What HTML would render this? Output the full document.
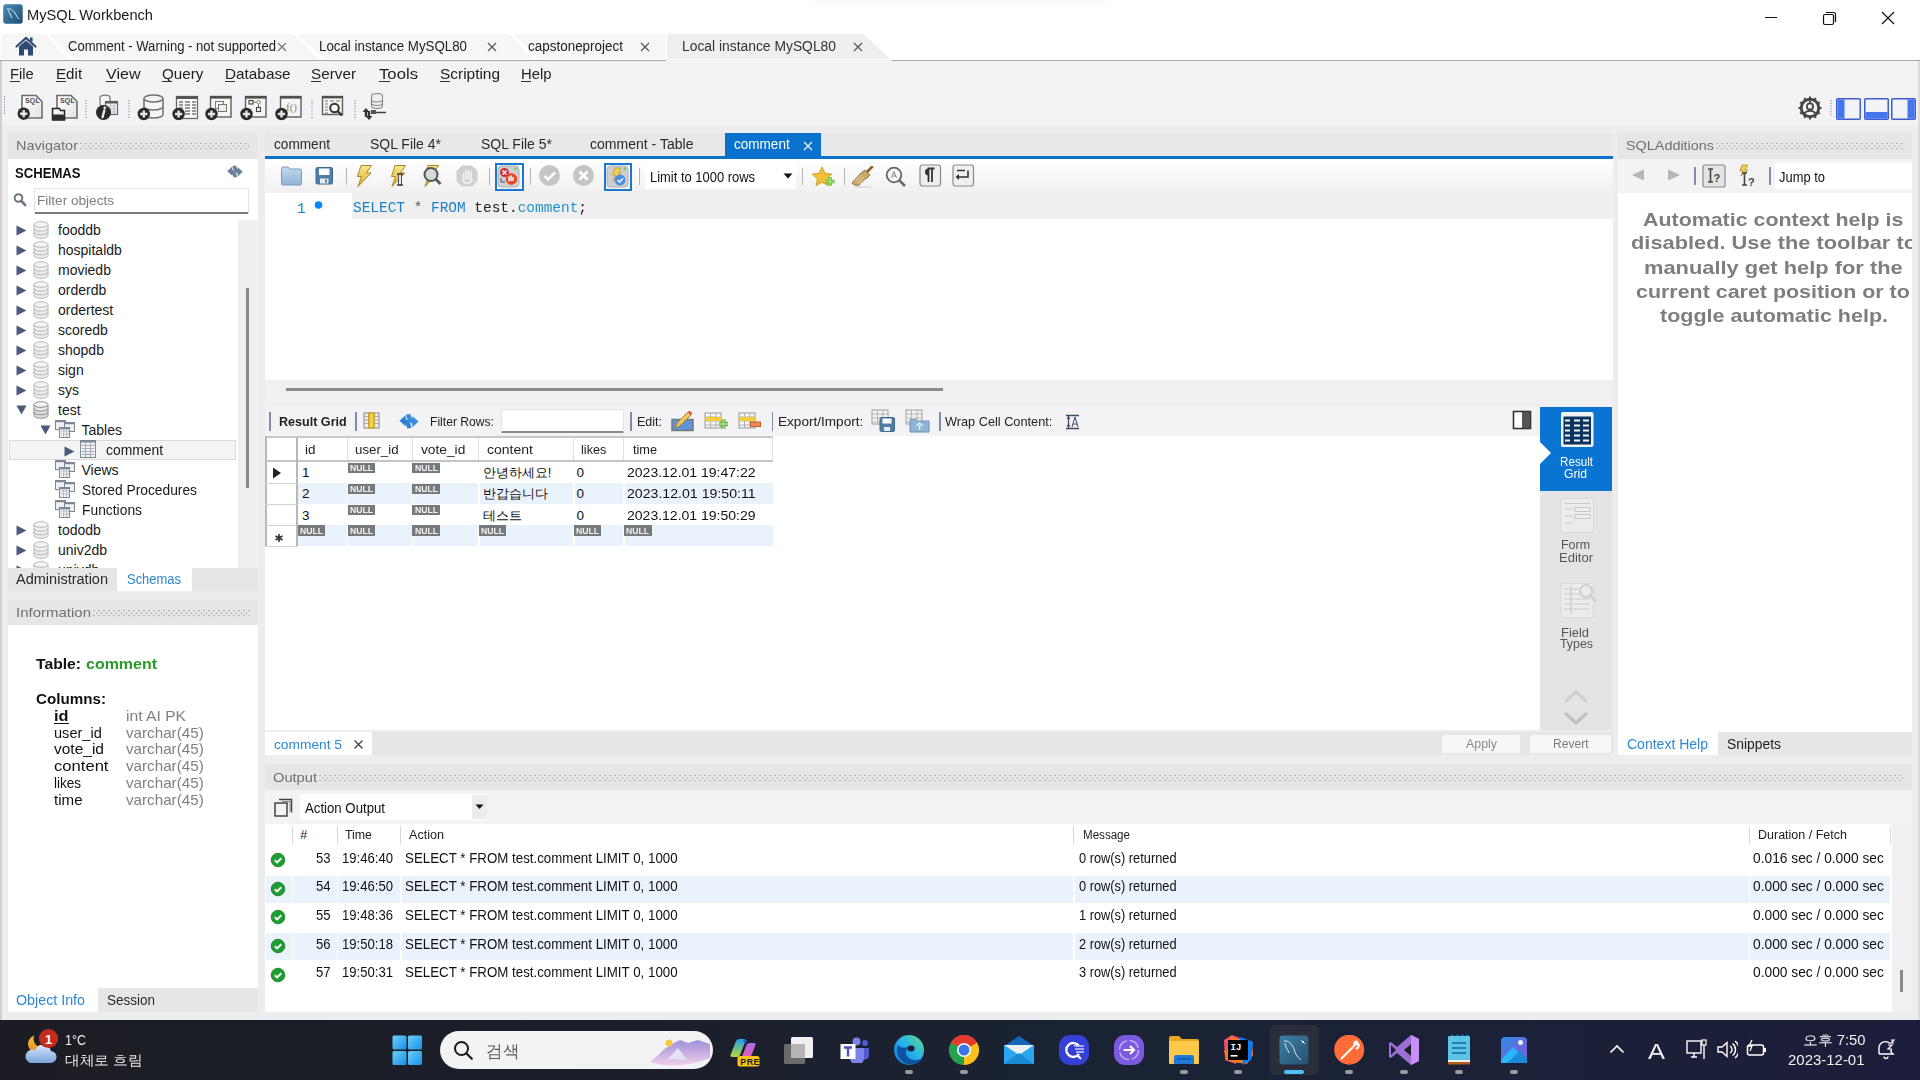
<!DOCTYPE html>
<html><head><meta charset="utf-8">
<style>
*{margin:0;padding:0;box-sizing:border-box}
html,body{width:1920px;height:1080px;overflow:hidden;background:#ededf0;font-family:"Liberation Sans",sans-serif;color:#000;position:relative}
.a{position:absolute;display:block}
.t{position:absolute;white-space:nowrap;line-height:1;transform-origin:0 0}
.dots{background-image:radial-gradient(circle at 1px 1px,#c4c4c4 0.9px,transparent 1.1px);background-size:4px 4px}
</style></head><body>

<div class="a" style="left:0px;top:0px;width:1920px;height:60px;background:#ffffff;"></div>
<div class="a" style="left:0px;top:60px;width:1920px;height:1px;background:#a9a9a9;"></div>
<div class="a" style="left:0px;top:61px;width:1920px;height:64px;background:#f3f3f5;"></div>
<div class="a" style="left:0px;top:125px;width:1920px;height:895px;background:#ededf0;"></div>
<div class="a" style="left:0px;top:61px;width:2px;height:959px;background:#cfcfd2;"></div>
<div class="a" style="left:1918px;top:61px;width:2px;height:959px;background:#dcdcde;"></div>
<div class="a" style="left:815px;top:-6px;width:290px;height:10px;background:#ececec;border-radius:8px;filter:blur(3px);opacity:0.4"></div>
<svg class="a" style="left:3px;top:4px;" width="20" height="20" viewBox="0 0 20 20"><rect x="0.5" y="0.5" width="19" height="19" rx="2" fill="#2f6b97"></rect><rect x="0.5" y="0.5" width="19" height="19" rx="2" fill="url(#tg)"></rect><defs><linearGradient id="tg" x1="0" y1="0" x2="1" y2="1"><stop offset="0" stop-color="#4b8ab8"></stop><stop offset="1" stop-color="#1f4f75"></stop></linearGradient></defs><path d="M4 5c3-1 6 1 8 4 1 2 2 4 4 6M5 6c1 3 3 5 4 8" stroke="#d9e8f3" stroke-width="1" fill="none"></path></svg>
<span class="t" style="left: 27px; top: 7.3px; font-size: 15px; color: rgb(26, 26, 26); transform: scaleX(0.9751);">MySQL Workbench</span>
<div class="a" style="left:1765px;top:17px;width:12px;height:1px;background:#111;"></div>
<svg class="a" style="left:1822px;top:11px;" width="15" height="15" viewBox="0 0 15 15"><rect x="1.5" y="3.5" width="10" height="10" rx="1.5" fill="none" stroke="#111" stroke-width="1.2"></rect><path d="M4 1.5h7.5a2 2 0 0 1 2 2V11" fill="none" stroke="#111" stroke-width="1.2"></path></svg>
<svg class="a" style="left:1881px;top:11px;" width="14" height="14" viewBox="0 0 14 14"><path d="M1 1L13 13M13 1L1 13" stroke="#111" stroke-width="1.2"></path></svg>
<svg class="a" style="left:0;top:32px" width="1000" height="28" viewBox="0 0 1000 28"><path d="M0.5 28 L0.5 4 Q0.5 1 4.5 1 L42 1 Q45 1 47 3 L70 28 Z" fill="#f6f6f6" stroke="#ffffff" stroke-width="1.6"></path></svg>
<svg class="a" style="left:0;top:32px" width="1000" height="28" viewBox="0 0 1000 28"><path d="M74 28 L49 4 Q49 1 53 1 L291 1 Q294 1 296 3 L321 28 Z" fill="#f6f6f6" stroke="#ffffff" stroke-width="1.6"></path></svg>
<svg class="a" style="left:0;top:32px" width="1000" height="28" viewBox="0 0 1000 28"><path d="M325 28 L298 4 Q298 1 302 1 L507 1 Q510 1 512 3 L535 28 Z" fill="#f6f6f6" stroke="#ffffff" stroke-width="1.6"></path></svg>
<svg class="a" style="left:0;top:32px" width="1000" height="28" viewBox="0 0 1000 28"><path d="M539 28 L514 4 Q514 1 518 1 L697 1 Q700 1 702 3 L725 28 Z" fill="#f6f6f6" stroke="#ffffff" stroke-width="1.6"></path></svg>
<svg class="a" style="left:0;top:32px" width="1000" height="28" viewBox="0 0 1000 28"><path d="M666 28 L666 4 Q666 1 670 1 L861 1 Q864 1 866 3 L892 28 Z" fill="#efeff1" stroke="#ffffff" stroke-width="1.6"></path></svg>
<div class="a" style="left:666px;top:60px;width:226px;height:1px;background:#efeff1;"></div>
<svg class="a" style="left:15px;top:36px;" width="22" height="20" viewBox="0 0 22 20"><path d="M1.5 10.5L11 2l9.5 8.5" stroke="#2e4a74" stroke-width="2.2" fill="none" stroke-linecap="round"></path><path d="M4 10.5L11 4.5l7 6V19.5h-5v-6h-4v6H4z" fill="#2e4a74"></path><rect x="15" y="1.5" width="2.6" height="4" fill="#2e4a74"></rect></svg>
<span class="t" style="left: 68px; top: 39.1px; font-size: 14px; color: rgb(34, 34, 34); transform: scaleX(0.9336);">Comment - Warning - not supported</span>
<svg class="a" style="left:277px;top:42px;" width="10" height="10" viewBox="0 0 10 10"><path d="M1 1L9 9M9 1L1 9" stroke="#777" stroke-width="1.2"></path></svg>
<span class="t" style="left: 319px; top: 39.1px; font-size: 14px; color: rgb(34, 34, 34); transform: scaleX(0.9509);">Local instance MySQL80</span>
<svg class="a" style="left:487px;top:42px;" width="10" height="10" viewBox="0 0 10 10"><path d="M1 1L9 9M9 1L1 9" stroke="#555" stroke-width="1.2"></path></svg>
<span class="t" style="left: 528px; top: 39.1px; font-size: 14px; color: rgb(34, 34, 34); transform: scaleX(0.9611);">capstoneproject</span>
<svg class="a" style="left:640px;top:42px;" width="10" height="10" viewBox="0 0 10 10"><path d="M1 1L9 9M9 1L1 9" stroke="#555" stroke-width="1.2"></path></svg>
<span class="t" style="left: 682px; top: 39.1px; font-size: 14px; color: rgb(51, 51, 51); transform: scaleX(0.9895);">Local instance MySQL80</span>
<svg class="a" style="left:853px;top:42px;" width="10" height="10" viewBox="0 0 10 10"><path d="M1 1L9 9M9 1L1 9" stroke="#555" stroke-width="1.2"></path></svg>
<span class="t" style="left: 10.2px; top: 66.3px; font-size: 15px; color: rgb(30, 30, 30); transform: scaleX(0.9846);">File</span>
<div class="a" style="left:10.2px;top:81px;width:10px;height:1px;background:#333;"></div>
<span class="t" style="left: 56.4px; top: 66.3px; font-size: 15px; color: rgb(30, 30, 30); transform: scaleX(1.0093);">Edit</span>
<div class="a" style="left:56.4px;top:81px;width:10px;height:1px;background:#333;"></div>
<span class="t" style="left: 105.5px; top: 66.3px; font-size: 15px; color: rgb(30, 30, 30); transform: scaleX(1.0698);">View</span>
<div class="a" style="left:105.5px;top:81px;width:10px;height:1px;background:#333;"></div>
<span class="t" style="left: 161.7px; top: 66.3px; font-size: 15px; color: rgb(30, 30, 30); transform: scaleX(1.0108);">Query</span>
<div class="a" style="left:161.7px;top:81px;width:10px;height:1px;background:#333;"></div>
<span class="t" style="left: 225px; top: 66.3px; font-size: 15px; color: rgb(30, 30, 30); transform: scaleX(1.0215);">Database</span>
<div class="a" style="left:225px;top:81px;width:10px;height:1px;background:#333;"></div>
<span class="t" style="left: 311px; top: 66.3px; font-size: 15px; color: rgb(30, 30, 30); transform: scaleX(1.0184);">Server</span>
<div class="a" style="left:311px;top:81px;width:10px;height:1px;background:#333;"></div>
<span class="t" style="left: 378.8px; top: 66.3px; font-size: 15px; color: rgb(30, 30, 30); transform: scaleX(1.1133);">Tools</span>
<div class="a" style="left:378.8px;top:81px;width:11px;height:1px;background:#333;"></div>
<span class="t" style="left: 440px; top: 66.3px; font-size: 15px; color: rgb(30, 30, 30); transform: scaleX(1.0281);">Scripting</span>
<div class="a" style="left:440px;top:81px;width:10px;height:1px;background:#333;"></div>
<span class="t" style="left: 521.4px; top: 66.3px; font-size: 15px; color: rgb(30, 30, 30); transform: scaleX(0.9916);">Help</span>
<div class="a" style="left:521.4px;top:81px;width:10px;height:1px;background:#333;"></div>
<svg class="a" style="left:3px;top:96px;" width="3" height="18" viewBox="0 0 3 18"><line x1="1.5" y1="0" x2="1.5" y2="18" stroke="#6a7fa8" stroke-width="1" stroke-dasharray="1.2 1.6"></line></svg>
<svg class="a" style="left:14px;top:94px;" width="32" height="28" viewBox="0 0 32 28"><defs><linearGradient id="dg" x1="0" y1="0" x2="1" y2="1"><stop offset="0" stop-color="#ffffff"></stop><stop offset="1" stop-color="#e4e4e4"></stop></linearGradient></defs><path d="M8 1.5H22 L28 7.5V24H8Z" fill="url(#dg)" stroke="#6d6d6d" stroke-width="1.6"></path><text x="11" y="9" font-family="Liberation Sans" font-size="7" font-weight="bold" fill="#4a4a4a" letter-spacing="0.2">SQL</text><circle cx="9.7" cy="19.7" r="6.2" fill="#2a2a2a"></circle><path d="M6.1 19.7H13.299999999999999M9.7 16.099999999999998V23.3" stroke="#e6e6e6" stroke-width="2.4"></path></svg>
<svg class="a" style="left:50px;top:94px;" width="32" height="28" viewBox="0 0 32 28"><path d="M7 1.5H21 L27 7.5V24H7Z" fill="url(#dg)" stroke="#6d6d6d" stroke-width="1.6"></path><text x="10" y="9" font-family="Liberation Sans" font-size="7" font-weight="bold" fill="#4a4a4a" letter-spacing="0.2">SQL</text><path d="M2.5 14.5H9.5L10.5 16.5H14.5V26H2.5Z" fill="#f2f2f2" stroke="#222" stroke-width="1.5"></path><path d="M1.5 20.5H13.5L15.5 26H3.5Z" fill="#2d2d2d"></path></svg>
<svg class="a" style="left:85px;top:100px;" width="2" height="18" viewBox="0 0 2 18"><line x1="1" y1="0" x2="1" y2="18" stroke="#6a7fa8" stroke-width="1" stroke-dasharray="1.2 1.6"></line></svg>
<svg class="a" style="left:94px;top:93px;" width="28" height="30" viewBox="0 0 28 30"><ellipse cx="11" cy="4.5" rx="5" ry="2.3" fill="#f4f4f4" stroke="#777" stroke-width="1.2"></ellipse><path d="M6 4.5V11a5 2.3 0 0 0 10 0V4.5" fill="#f4f4f4" stroke="#777" stroke-width="1.2"></path><rect x="11.5" y="8.5" width="12" height="13" fill="#f4f4f4" stroke="#666" stroke-width="1.2"></rect><rect x="11.5" y="8.5" width="12" height="2" fill="#555"></rect><path d="M13 13h9M13 16h9M13 19h9M16.5 11v10M20 11v10" stroke="#bbb" stroke-width="1"></path><circle cx="9.5" cy="19.5" r="7.5" fill="#2a2a2a"></circle><circle cx="10.8" cy="14.8" r="1.4" fill="#e8e8e8"></circle><path d="M10.3 17.5L8.6 24" stroke="#e8e8e8" stroke-width="2.4" stroke-linecap="round"></path></svg>
<svg class="a" style="left:128px;top:100px;" width="2" height="18" viewBox="0 0 2 18"><line x1="1" y1="0" x2="1" y2="18" stroke="#6a7fa8" stroke-width="1" stroke-dasharray="1.2 1.6"></line></svg>
<svg class="a" style="left:136px;top:93px;" width="30" height="30" viewBox="0 0 30 30"><path d="M8 5.5V21.5a9.5 3.5 0 0 0 19 0V5.5" fill="#f6f6f6" stroke="#6f6f6f" stroke-width="1.5"></path><ellipse cx="17.5" cy="5.5" rx="9.5" ry="3.5" fill="#f3f3f3" stroke="#6f6f6f" stroke-width="1.5"></ellipse><path d="M8 13.5a9.5 3.5 0 0 0 19 0" fill="none" stroke="#6f6f6f" stroke-width="1.5"></path><circle cx="7.8" cy="21" r="6.2" fill="#2a2a2a"></circle><path d="M4.199999999999999 21H11.4M7.8 17.4V24.6" stroke="#e6e6e6" stroke-width="2.4"></path></svg>
<svg class="a" style="left:170px;top:93px;" width="30" height="30" viewBox="0 0 30 30"><rect x="6.5" y="3.5" width="21" height="22" fill="#f8f8f8" stroke="#6a6a6a" stroke-width="1.3"></rect><rect x="6" y="3" width="22" height="3" fill="#555"></rect><path d="M9 9h4M15 9h5M22 9h4M9 12h4M15 12h5M22 12h4M9 15h4M15 15h5M22 15h4M15 18h5M22 18h4M15 21h5M22 21h4" stroke="#7a7a7a" stroke-width="1.6"></path><circle cx="8.6" cy="21" r="6.2" fill="#2a2a2a"></circle><path d="M5.0 21H12.2M8.6 17.4V24.6" stroke="#e6e6e6" stroke-width="2.4"></path></svg>
<svg class="a" style="left:204px;top:93px;" width="30" height="30" viewBox="0 0 30 30"><rect x="6.5" y="3.5" width="20.5" height="20.5" fill="#f5f5f3" stroke="#5f5f5f" stroke-width="1.4"></rect><rect x="6" y="3" width="21.5" height="2.6" fill="#4f4f4f"></rect><rect x="11.5" y="8.5" width="8" height="7" fill="none" stroke="#777" stroke-width="1"></rect><rect x="14.5" y="11.5" width="8" height="7" fill="#eee" stroke="#777" stroke-width="1"></rect><circle cx="7.5" cy="21" r="6.2" fill="#2a2a2a"></circle><path d="M3.9 21H11.1M7.5 17.4V24.6" stroke="#e6e6e6" stroke-width="2.4"></path></svg>
<svg class="a" style="left:239px;top:93px;" width="30" height="30" viewBox="0 0 30 30"><rect x="6.5" y="3.5" width="20.5" height="20.5" fill="#f5f5f3" stroke="#5f5f5f" stroke-width="1.4"></rect><rect x="6" y="3" width="21.5" height="2.6" fill="#4f4f4f"></rect><rect x="10" y="7.5" width="4" height="3.5" fill="none" stroke="#444" stroke-width="1.1"></rect><path d="M14 9.2h3M19.5 7l2.2 2.2-2.2 2.2-2.2-2.2z" fill="none" stroke="#666" stroke-width="1"></path><path d="M19.5 11.5v3" stroke="#666"></path><rect x="17.5" y="14.5" width="4" height="4" fill="none" stroke="#444" stroke-width="1.1"></rect><circle cx="7.5" cy="21" r="6.2" fill="#2a2a2a"></circle><path d="M3.9 21H11.1M7.5 17.4V24.6" stroke="#e6e6e6" stroke-width="2.4"></path></svg>
<svg class="a" style="left:274px;top:93px;" width="30" height="30" viewBox="0 0 30 30"><rect x="6.5" y="3.5" width="20.5" height="20.5" fill="#f5f5f3" stroke="#5f5f5f" stroke-width="1.4"></rect><rect x="6" y="3" width="21.5" height="2.6" fill="#4f4f4f"></rect><text x="12" y="18" font-family="Liberation Serif" font-size="11" fill="#888">f()</text><circle cx="7.5" cy="21" r="6.2" fill="#2a2a2a"></circle><path d="M3.9 21H11.1M7.5 17.4V24.6" stroke="#e6e6e6" stroke-width="2.4"></path></svg>
<svg class="a" style="left:311px;top:100px;" width="2" height="18" viewBox="0 0 2 18"><line x1="1" y1="0" x2="1" y2="18" stroke="#6a7fa8" stroke-width="1" stroke-dasharray="1.2 1.6"></line></svg>
<svg class="a" style="left:318px;top:93px;" width="30" height="30" viewBox="0 0 30 30"><rect x="4.5" y="3.5" width="20" height="18" fill="#f5f5f3" stroke="#5f5f5f" stroke-width="1.4"></rect><rect x="4" y="3" width="21" height="2.4" fill="#4f4f4f"></rect><path d="M7 8h3M12 8h4M18 8h4M7 11h3M7 14h3M7 17h3M7 20h3" stroke="#777" stroke-width="1.2"></path><circle cx="16.5" cy="15" r="4.3" fill="#f5f5f3" stroke="#333" stroke-width="2"></circle><path d="M19.5 18l4.5 4.5" stroke="#333" stroke-width="2.4"></path></svg>
<svg class="a" style="left:354px;top:100px;" width="2" height="18" viewBox="0 0 2 18"><line x1="1" y1="0" x2="1" y2="18" stroke="#6a7fa8" stroke-width="1" stroke-dasharray="1.2 1.6"></line></svg>
<svg class="a" style="left:358px;top:91px;" width="32" height="32" viewBox="0 0 32 32"><ellipse cx="19" cy="5" rx="5.5" ry="2.5" fill="#eee" stroke="#888" stroke-width="1.1"></ellipse><path d="M13.5 5v10a5.5 2.5 0 0 0 11 0V5M13.5 8.5a5.5 2.5 0 0 0 11 0M13.5 12a5.5 2.5 0 0 0 11 0" fill="#eee" stroke="#888" stroke-width="1.1"></path><path d="M14 21.5h14" stroke="#444" stroke-width="1.5"></path><rect x="13" y="19" width="5" height="4" fill="#555"></rect><path d="M8 17l-3.5 4h2.3v5h2.4v-5h2.3z" fill="#333"></path><path d="M11 29l3.5-4h-2.3v-5h-2.4v5H7.5z" fill="#333"></path></svg>
<svg class="a" style="left:1797px;top:95px;" width="26" height="26" viewBox="0 0 26 26"><g fill="#444"><circle cx="13" cy="13" r="10.2"></circle></g><g stroke="#444" stroke-width="2"><line x1="13" y1="1.5" x2="13" y2="3.5" transform="rotate(0 13 13)"></line><line x1="13" y1="1.5" x2="13" y2="3.5" transform="rotate(30 13 13)"></line><line x1="13" y1="1.5" x2="13" y2="3.5" transform="rotate(60 13 13)"></line><line x1="13" y1="1.5" x2="13" y2="3.5" transform="rotate(90 13 13)"></line><line x1="13" y1="1.5" x2="13" y2="3.5" transform="rotate(120 13 13)"></line><line x1="13" y1="1.5" x2="13" y2="3.5" transform="rotate(150 13 13)"></line><line x1="13" y1="1.5" x2="13" y2="3.5" transform="rotate(180 13 13)"></line><line x1="13" y1="1.5" x2="13" y2="3.5" transform="rotate(210 13 13)"></line><line x1="13" y1="1.5" x2="13" y2="3.5" transform="rotate(240 13 13)"></line><line x1="13" y1="1.5" x2="13" y2="3.5" transform="rotate(270 13 13)"></line><line x1="13" y1="1.5" x2="13" y2="3.5" transform="rotate(300 13 13)"></line><line x1="13" y1="1.5" x2="13" y2="3.5" transform="rotate(330 13 13)"></line></g><circle cx="13" cy="13" r="7.3" fill="#f3f3f5"></circle><circle cx="13" cy="11.5" r="3.1" fill="none" stroke="#444" stroke-width="1.8"></circle><path d="M7.5 18.5a6 4.5 0 0 1 11 0" fill="none" stroke="#444" stroke-width="1.8"></path><path d="M13 6v2.3" stroke="#444" stroke-width="1.8"></path></svg>
<svg class="a" style="left:1830px;top:100px;" width="2" height="17" viewBox="0 0 2 17"><line x1="1" y1="0" x2="1" y2="17" stroke="#6a7fa8" stroke-width="1" stroke-dasharray="1.2 1.6"></line></svg>
<svg class="a" style="left:1836px;top:98px;" width="26" height="22" viewBox="0 0 26 22"><rect x="0.75" y="0.75" width="23.5" height="20.5" rx="1" fill="#f3f3f5" stroke="#3d5ccf" stroke-width="1.5"></rect><rect x="1.5" y="1.5" width="7" height="19" fill="#4477ee"></rect></svg>
<svg class="a" style="left:1864px;top:98px;" width="26" height="22" viewBox="0 0 26 22"><rect x="0.75" y="0.75" width="23.5" height="20.5" rx="1" fill="#f3f3f5" stroke="#3d5ccf" stroke-width="1.5"></rect><rect x="1.5" y="14" width="22" height="6.5" fill="#4477ee"></rect></svg>
<svg class="a" style="left:1891px;top:98px;" width="26" height="22" viewBox="0 0 26 22"><rect x="0.75" y="0.75" width="23.5" height="20.5" rx="1" fill="#f3f3f5" stroke="#3d5ccf" stroke-width="1.5"></rect><rect x="16.5" y="1.5" width="7" height="19" fill="#4477ee"></rect></svg>
<svg width="0" height="0" style="position:absolute"><defs><pattern id="hdots" x="0" y="0" width="5" height="5" patternUnits="userSpaceOnUse"><circle cx="1" cy="0.6" r="0.65" fill="#8c8c8c"></circle><circle cx="3.5" cy="3.1" r="0.65" fill="#8c8c8c"></circle></pattern><linearGradient id="dbg" x1="0" y1="0" x2="1" y2="0"><stop offset="0" stop-color="#d8d8d8"></stop><stop offset="0.5" stop-color="#f6f6f6"></stop><stop offset="1" stop-color="#d0d0d0"></stop></linearGradient></defs></svg>
<div class="a" style="left:8px;top:133px;width:250px;height:26px;background:#e6e6e7;"></div>
<span class="t" style="left: 16px; top: 138.6px; font-size: 13.5px; color: rgb(112, 112, 112); transform: scaleX(1.073);">Navigator</span>
<svg class="a" style="left:80px;top:142.5px;" width="170" height="7" viewBox="0 0 170 7"><rect x="0" y="0" width="100%" height="7" fill="url(#hdots)"></rect></svg>
<div class="a" style="left:8px;top:159px;width:250px;height:409px;background:#ffffff;"></div>
<span class="t" style="left: 15px; top: 166.1px; font-size: 14px; color: rgb(17, 17, 17); font-weight: bold; transform: scaleX(0.9355);">SCHEMAS</span>
<svg class="a" style="left:226px;top:164px;" width="18" height="15" viewBox="0 0 18 15"><path d="M5 7.2Q8.5 8 9.3 13.2" stroke="#6b7f9b" stroke-width="3.6" fill="none"></path><path d="M1.2 7.2L6.3 2.6V11.8Z" fill="#6b7f9b"></path><path d="M12.3 7.8Q9 7 8.4 1.8" stroke="#6b7f9b" stroke-width="3.6" fill="none"></path><path d="M16.8 7.8L11.7 12.4V3.2Z" fill="#6b7f9b"></path></svg>
<svg class="a" style="left:13px;top:192px;" width="14" height="16" viewBox="0 0 14 16"><circle cx="5.5" cy="6" r="3.8" fill="none" stroke="#6e7784" stroke-width="2"></circle><path d="M8.3 9l3.8 4" stroke="#6e7784" stroke-width="2.6" stroke-linecap="round"></path></svg>
<div class="a" style="left:34px;top:188px;width:215px;height:26px;background:#ffffff;border:1px solid #e3e3e3;border-bottom:2px solid #7a7a7a;border-radius:2px"></div>
<span class="t" style="left: 37px; top: 193.6px; font-size: 13.5px; color: rgb(125, 125, 125); transform: scaleX(1.0061);">Filter objects</span>
<div class="a" style="left:238px;top:220px;width:20px;height:348px;background:#efeff1;"></div>
<div class="a" style="left:246px;top:288px;width:3px;height:200px;background:#8a8a8a;"></div>
<svg class="a" style="left:16px;top:225px;" width="11" height="11" viewBox="0 0 11 11"><path d="M0.5 0.5L10.5 5.5L0.5 10.5Z" fill="#4a5b7b"></path></svg>
<svg class="a" style="left:33px;top:221px;" width="16" height="18" viewBox="0 0 16 18"><path d="M1 3.5V14.5a7 2.8 0 0 0 14 0V3.5" fill="#ececec" stroke="#b9b9b9" stroke-width="1"></path><ellipse cx="8" cy="3.5" rx="7" ry="2.8" fill="#f4f4f4" stroke="#b9b9b9" stroke-width="1"></ellipse><path d="M1 7.3a7 2.8 0 0 0 14 0M1 11a7 2.8 0 0 0 14 0" fill="none" stroke="#b9b9b9" stroke-width="1"></path><path d="M2 6.5a6 2 0 0 0 12 0" fill="none" stroke="#fff" stroke-width="1" opacity="0.7"></path></svg>
<span class="t" style="left:58px;top:223.1px;font-size:14px;color:#1a1a1a;">fooddb</span>
<svg class="a" style="left:16px;top:245px;" width="11" height="11" viewBox="0 0 11 11"><path d="M0.5 0.5L10.5 5.5L0.5 10.5Z" fill="#4a5b7b"></path></svg>
<svg class="a" style="left:33px;top:241px;" width="16" height="18" viewBox="0 0 16 18"><path d="M1 3.5V14.5a7 2.8 0 0 0 14 0V3.5" fill="#ececec" stroke="#b9b9b9" stroke-width="1"></path><ellipse cx="8" cy="3.5" rx="7" ry="2.8" fill="#f4f4f4" stroke="#b9b9b9" stroke-width="1"></ellipse><path d="M1 7.3a7 2.8 0 0 0 14 0M1 11a7 2.8 0 0 0 14 0" fill="none" stroke="#b9b9b9" stroke-width="1"></path><path d="M2 6.5a6 2 0 0 0 12 0" fill="none" stroke="#fff" stroke-width="1" opacity="0.7"></path></svg>
<span class="t" style="left:58px;top:243.1px;font-size:14px;color:#1a1a1a;">hospitaldb</span>
<svg class="a" style="left:16px;top:265px;" width="11" height="11" viewBox="0 0 11 11"><path d="M0.5 0.5L10.5 5.5L0.5 10.5Z" fill="#4a5b7b"></path></svg>
<svg class="a" style="left:33px;top:261px;" width="16" height="18" viewBox="0 0 16 18"><path d="M1 3.5V14.5a7 2.8 0 0 0 14 0V3.5" fill="#ececec" stroke="#b9b9b9" stroke-width="1"></path><ellipse cx="8" cy="3.5" rx="7" ry="2.8" fill="#f4f4f4" stroke="#b9b9b9" stroke-width="1"></ellipse><path d="M1 7.3a7 2.8 0 0 0 14 0M1 11a7 2.8 0 0 0 14 0" fill="none" stroke="#b9b9b9" stroke-width="1"></path><path d="M2 6.5a6 2 0 0 0 12 0" fill="none" stroke="#fff" stroke-width="1" opacity="0.7"></path></svg>
<span class="t" style="left:58px;top:263.1px;font-size:14px;color:#1a1a1a;">moviedb</span>
<svg class="a" style="left:16px;top:285px;" width="11" height="11" viewBox="0 0 11 11"><path d="M0.5 0.5L10.5 5.5L0.5 10.5Z" fill="#4a5b7b"></path></svg>
<svg class="a" style="left:33px;top:281px;" width="16" height="18" viewBox="0 0 16 18"><path d="M1 3.5V14.5a7 2.8 0 0 0 14 0V3.5" fill="#ececec" stroke="#b9b9b9" stroke-width="1"></path><ellipse cx="8" cy="3.5" rx="7" ry="2.8" fill="#f4f4f4" stroke="#b9b9b9" stroke-width="1"></ellipse><path d="M1 7.3a7 2.8 0 0 0 14 0M1 11a7 2.8 0 0 0 14 0" fill="none" stroke="#b9b9b9" stroke-width="1"></path><path d="M2 6.5a6 2 0 0 0 12 0" fill="none" stroke="#fff" stroke-width="1" opacity="0.7"></path></svg>
<span class="t" style="left:58px;top:283.1px;font-size:14px;color:#1a1a1a;">orderdb</span>
<svg class="a" style="left:16px;top:305px;" width="11" height="11" viewBox="0 0 11 11"><path d="M0.5 0.5L10.5 5.5L0.5 10.5Z" fill="#4a5b7b"></path></svg>
<svg class="a" style="left:33px;top:301px;" width="16" height="18" viewBox="0 0 16 18"><path d="M1 3.5V14.5a7 2.8 0 0 0 14 0V3.5" fill="#ececec" stroke="#b9b9b9" stroke-width="1"></path><ellipse cx="8" cy="3.5" rx="7" ry="2.8" fill="#f4f4f4" stroke="#b9b9b9" stroke-width="1"></ellipse><path d="M1 7.3a7 2.8 0 0 0 14 0M1 11a7 2.8 0 0 0 14 0" fill="none" stroke="#b9b9b9" stroke-width="1"></path><path d="M2 6.5a6 2 0 0 0 12 0" fill="none" stroke="#fff" stroke-width="1" opacity="0.7"></path></svg>
<span class="t" style="left:58px;top:303.1px;font-size:14px;color:#1a1a1a;">ordertest</span>
<svg class="a" style="left:16px;top:325px;" width="11" height="11" viewBox="0 0 11 11"><path d="M0.5 0.5L10.5 5.5L0.5 10.5Z" fill="#4a5b7b"></path></svg>
<svg class="a" style="left:33px;top:321px;" width="16" height="18" viewBox="0 0 16 18"><path d="M1 3.5V14.5a7 2.8 0 0 0 14 0V3.5" fill="#ececec" stroke="#b9b9b9" stroke-width="1"></path><ellipse cx="8" cy="3.5" rx="7" ry="2.8" fill="#f4f4f4" stroke="#b9b9b9" stroke-width="1"></ellipse><path d="M1 7.3a7 2.8 0 0 0 14 0M1 11a7 2.8 0 0 0 14 0" fill="none" stroke="#b9b9b9" stroke-width="1"></path><path d="M2 6.5a6 2 0 0 0 12 0" fill="none" stroke="#fff" stroke-width="1" opacity="0.7"></path></svg>
<span class="t" style="left:58px;top:323.1px;font-size:14px;color:#1a1a1a;">scoredb</span>
<svg class="a" style="left:16px;top:345px;" width="11" height="11" viewBox="0 0 11 11"><path d="M0.5 0.5L10.5 5.5L0.5 10.5Z" fill="#4a5b7b"></path></svg>
<svg class="a" style="left:33px;top:341px;" width="16" height="18" viewBox="0 0 16 18"><path d="M1 3.5V14.5a7 2.8 0 0 0 14 0V3.5" fill="#ececec" stroke="#b9b9b9" stroke-width="1"></path><ellipse cx="8" cy="3.5" rx="7" ry="2.8" fill="#f4f4f4" stroke="#b9b9b9" stroke-width="1"></ellipse><path d="M1 7.3a7 2.8 0 0 0 14 0M1 11a7 2.8 0 0 0 14 0" fill="none" stroke="#b9b9b9" stroke-width="1"></path><path d="M2 6.5a6 2 0 0 0 12 0" fill="none" stroke="#fff" stroke-width="1" opacity="0.7"></path></svg>
<span class="t" style="left:58px;top:343.1px;font-size:14px;color:#1a1a1a;">shopdb</span>
<svg class="a" style="left:16px;top:365px;" width="11" height="11" viewBox="0 0 11 11"><path d="M0.5 0.5L10.5 5.5L0.5 10.5Z" fill="#4a5b7b"></path></svg>
<svg class="a" style="left:33px;top:361px;" width="16" height="18" viewBox="0 0 16 18"><path d="M1 3.5V14.5a7 2.8 0 0 0 14 0V3.5" fill="#ececec" stroke="#b9b9b9" stroke-width="1"></path><ellipse cx="8" cy="3.5" rx="7" ry="2.8" fill="#f4f4f4" stroke="#b9b9b9" stroke-width="1"></ellipse><path d="M1 7.3a7 2.8 0 0 0 14 0M1 11a7 2.8 0 0 0 14 0" fill="none" stroke="#b9b9b9" stroke-width="1"></path><path d="M2 6.5a6 2 0 0 0 12 0" fill="none" stroke="#fff" stroke-width="1" opacity="0.7"></path></svg>
<span class="t" style="left:58px;top:363.1px;font-size:14px;color:#1a1a1a;">sign</span>
<svg class="a" style="left:16px;top:385px;" width="11" height="11" viewBox="0 0 11 11"><path d="M0.5 0.5L10.5 5.5L0.5 10.5Z" fill="#4a5b7b"></path></svg>
<svg class="a" style="left:33px;top:381px;" width="16" height="18" viewBox="0 0 16 18"><path d="M1 3.5V14.5a7 2.8 0 0 0 14 0V3.5" fill="#ececec" stroke="#b9b9b9" stroke-width="1"></path><ellipse cx="8" cy="3.5" rx="7" ry="2.8" fill="#f4f4f4" stroke="#b9b9b9" stroke-width="1"></ellipse><path d="M1 7.3a7 2.8 0 0 0 14 0M1 11a7 2.8 0 0 0 14 0" fill="none" stroke="#b9b9b9" stroke-width="1"></path><path d="M2 6.5a6 2 0 0 0 12 0" fill="none" stroke="#fff" stroke-width="1" opacity="0.7"></path></svg>
<span class="t" style="left:58px;top:383.1px;font-size:14px;color:#1a1a1a;">sys</span>
<svg class="a" style="left:16px;top:405px;" width="11" height="10" viewBox="0 0 11 10"><path d="M0.5 0.5H10.5L5.5 9.5Z" fill="#4a5b7b"></path></svg>
<svg class="a" style="left:33px;top:401px;" width="16" height="18" viewBox="0 0 16 18"><path d="M1 3.5V14.5a7 2.8 0 0 0 14 0V3.5" fill="#dcdcdc" stroke="#8f8f8f" stroke-width="1"></path><ellipse cx="8" cy="3.5" rx="7" ry="2.8" fill="#f4f4f4" stroke="#8f8f8f" stroke-width="1"></ellipse><path d="M1 7.3a7 2.8 0 0 0 14 0M1 11a7 2.8 0 0 0 14 0" fill="none" stroke="#8f8f8f" stroke-width="1"></path><path d="M2 6.5a6 2 0 0 0 12 0" fill="none" stroke="#fff" stroke-width="1" opacity="0.7"></path></svg>
<span class="t" style="left:58px;top:403.1px;font-size:14px;color:#1a1a1a;">test</span>
<svg class="a" style="left:40px;top:425px;" width="11" height="10" viewBox="0 0 11 10"><path d="M0.5 0.5H10.5L5.5 9.5Z" fill="#4a5b7b"></path></svg>
<svg class="a" style="left:55px;top:420px;" width="21" height="18" viewBox="0 0 21 18"><rect x="0.5" y="0.5" width="10" height="9" fill="#eef0f2" stroke="#7d8793" stroke-width="1"></rect><rect x="0" y="0" width="11" height="2.2" fill="#7d8793"></rect><rect x="9.5" y="2.5" width="10" height="9" fill="#eef0f2" stroke="#7d8793" stroke-width="1"></rect><rect x="9" y="2" width="11" height="2.2" fill="#7d8793"></rect><rect x="4.5" y="7.5" width="10" height="10" fill="#eef0f2" stroke="#7d8793" stroke-width="1"></rect><rect x="4" y="7" width="11" height="2.2" fill="#7d8793"></rect><path d="M6 11h8M6 14h8M8.5 9v8M11.5 9v8" stroke="#b5bcc5" stroke-width="0.9"></path></svg>
<span class="t" style="left:81.5px;top:423.1px;font-size:14px;color:#1a1a1a;">Tables</span>
<div class="a" style="left:9px;top:440px;width:227px;height:20px;background:#f4f4f4;border:1px solid #dadada"></div>
<svg class="a" style="left:64px;top:446px;" width="11" height="11" viewBox="0 0 11 11"><path d="M0.5 0.5L10.5 5.5L0.5 10.5Z" fill="#4a5b7b"></path></svg>
<svg class="a" style="left:80px;top:440px;" width="17" height="18" viewBox="0 0 17 18"><rect x="0.5" y="0.5" width="15" height="17" fill="#eef0f2" stroke="#7d8793" stroke-width="1"></rect><rect x="0" y="0" width="16" height="2.5" fill="#7d8793"></rect><path d="M2 5.5h12M2 8.5h12M2 11.5h12M2 14.5h12M5.5 3v14M10.5 3v14" stroke="#a6afba" stroke-width="1"></path></svg>
<span class="t" style="left: 105.5px; top: 443.1px; font-size: 14px; color: rgb(26, 26, 26); transform: scaleX(0.99);">comment</span>
<svg class="a" style="left:55px;top:460px;" width="21" height="18" viewBox="0 0 21 18"><rect x="0.5" y="0.5" width="10" height="9" fill="#eef0f2" stroke="#7d8793" stroke-width="1"></rect><rect x="0" y="0" width="11" height="2.2" fill="#7d8793"></rect><rect x="9.5" y="2.5" width="10" height="9" fill="#eef0f2" stroke="#7d8793" stroke-width="1"></rect><rect x="9" y="2" width="11" height="2.2" fill="#7d8793"></rect><rect x="4.5" y="7.5" width="10" height="10" fill="#eef0f2" stroke="#7d8793" stroke-width="1"></rect><rect x="4" y="7" width="11" height="2.2" fill="#7d8793"></rect><path d="M6 11h8M6 14h8M8.5 9v8M11.5 9v8" stroke="#b5bcc5" stroke-width="0.9"></path></svg>
<span class="t" style="left:81.5px;top:463.1px;font-size:14px;color:#1a1a1a;">Views</span>
<svg class="a" style="left:55px;top:480px;" width="21" height="18" viewBox="0 0 21 18"><rect x="0.5" y="0.5" width="10" height="9" fill="#eef0f2" stroke="#7d8793" stroke-width="1"></rect><rect x="0" y="0" width="11" height="2.2" fill="#7d8793"></rect><rect x="9.5" y="2.5" width="10" height="9" fill="#eef0f2" stroke="#7d8793" stroke-width="1"></rect><rect x="9" y="2" width="11" height="2.2" fill="#7d8793"></rect><rect x="4.5" y="7.5" width="10" height="10" fill="#eef0f2" stroke="#7d8793" stroke-width="1"></rect><rect x="4" y="7" width="11" height="2.2" fill="#7d8793"></rect><path d="M6 11h8M6 14h8M8.5 9v8M11.5 9v8" stroke="#b5bcc5" stroke-width="0.9"></path></svg>
<span class="t" style="left: 81.5px; top: 483.1px; font-size: 14px; color: rgb(26, 26, 26); transform: scaleX(0.9851);">Stored Procedures</span>
<svg class="a" style="left:55px;top:500px;" width="21" height="18" viewBox="0 0 21 18"><rect x="0.5" y="0.5" width="10" height="9" fill="#eef0f2" stroke="#7d8793" stroke-width="1"></rect><rect x="0" y="0" width="11" height="2.2" fill="#7d8793"></rect><rect x="9.5" y="2.5" width="10" height="9" fill="#eef0f2" stroke="#7d8793" stroke-width="1"></rect><rect x="9" y="2" width="11" height="2.2" fill="#7d8793"></rect><rect x="4.5" y="7.5" width="10" height="10" fill="#eef0f2" stroke="#7d8793" stroke-width="1"></rect><rect x="4" y="7" width="11" height="2.2" fill="#7d8793"></rect><path d="M6 11h8M6 14h8M8.5 9v8M11.5 9v8" stroke="#b5bcc5" stroke-width="0.9"></path></svg>
<span class="t" style="left: 81.5px; top: 503.1px; font-size: 14px; color: rgb(26, 26, 26); transform: scaleX(0.9884);">Functions</span>
<svg class="a" style="left:16px;top:525px;" width="11" height="11" viewBox="0 0 11 11"><path d="M0.5 0.5L10.5 5.5L0.5 10.5Z" fill="#4a5b7b"></path></svg>
<svg class="a" style="left:33px;top:521px;" width="16" height="18" viewBox="0 0 16 18"><path d="M1 3.5V14.5a7 2.8 0 0 0 14 0V3.5" fill="#ececec" stroke="#b9b9b9" stroke-width="1"></path><ellipse cx="8" cy="3.5" rx="7" ry="2.8" fill="#f4f4f4" stroke="#b9b9b9" stroke-width="1"></ellipse><path d="M1 7.3a7 2.8 0 0 0 14 0M1 11a7 2.8 0 0 0 14 0" fill="none" stroke="#b9b9b9" stroke-width="1"></path><path d="M2 6.5a6 2 0 0 0 12 0" fill="none" stroke="#fff" stroke-width="1" opacity="0.7"></path></svg>
<span class="t" style="left:58px;top:523.1px;font-size:14px;color:#1a1a1a;">tododb</span>
<svg class="a" style="left:16px;top:545px;" width="11" height="11" viewBox="0 0 11 11"><path d="M0.5 0.5L10.5 5.5L0.5 10.5Z" fill="#4a5b7b"></path></svg>
<svg class="a" style="left:33px;top:541px;" width="16" height="18" viewBox="0 0 16 18"><path d="M1 3.5V14.5a7 2.8 0 0 0 14 0V3.5" fill="#ececec" stroke="#b9b9b9" stroke-width="1"></path><ellipse cx="8" cy="3.5" rx="7" ry="2.8" fill="#f4f4f4" stroke="#b9b9b9" stroke-width="1"></ellipse><path d="M1 7.3a7 2.8 0 0 0 14 0M1 11a7 2.8 0 0 0 14 0" fill="none" stroke="#b9b9b9" stroke-width="1"></path><path d="M2 6.5a6 2 0 0 0 12 0" fill="none" stroke="#fff" stroke-width="1" opacity="0.7"></path></svg>
<span class="t" style="left:58px;top:543.1px;font-size:14px;color:#1a1a1a;">univ2db</span>
<svg class="a" style="left:16px;top:565px;" width="11" height="11" viewBox="0 0 11 11"><path d="M0.5 0.5L10.5 5.5L0.5 10.5Z" fill="#4a5b7b"></path></svg>
<svg class="a" style="left:33px;top:561px;" width="16" height="18" viewBox="0 0 16 18"><path d="M1 3.5V14.5a7 2.8 0 0 0 14 0V3.5" fill="#ececec" stroke="#b9b9b9" stroke-width="1"></path><ellipse cx="8" cy="3.5" rx="7" ry="2.8" fill="#f4f4f4" stroke="#b9b9b9" stroke-width="1"></ellipse><path d="M1 7.3a7 2.8 0 0 0 14 0M1 11a7 2.8 0 0 0 14 0" fill="none" stroke="#b9b9b9" stroke-width="1"></path><path d="M2 6.5a6 2 0 0 0 12 0" fill="none" stroke="#fff" stroke-width="1" opacity="0.7"></path></svg>
<span class="t" style="left:58px;top:563.1px;font-size:14px;color:#1a1a1a;">univdb</span>
<div class="a" style="left:8px;top:568px;width:250px;height:23px;background:#e6e6e7;"></div>
<div class="a" style="left:117px;top:568px;width:75px;height:23px;background:#ffffff;"></div>
<span class="t" style="left: 16px; top: 572.1px; font-size: 14px; color: rgb(42, 42, 42); transform: scaleX(1.0372);">Administration</span>
<span class="t" style="left: 126.5px; top: 572.1px; font-size: 14px; color: rgb(45, 134, 214); transform: scaleX(0.9253);">Schemas</span>
<div class="a" style="left:8px;top:600px;width:250px;height:25px;background:#e6e6e7;"></div>
<span class="t" style="left: 16px; top: 605.6px; font-size: 13.5px; color: rgb(112, 112, 112); transform: scaleX(1.1103);">Information</span>
<svg class="a" style="left:93px;top:609.5px;" width="157" height="7" viewBox="0 0 157 7"><rect x="0" y="0" width="100%" height="7" fill="url(#hdots)"></rect></svg>
<div class="a" style="left:8px;top:625px;width:250px;height:363px;background:#ffffff;"></div>
<span class="t" style="left: 36px; top: 656.3px; font-size: 15px; color: rgb(17, 17, 17); font-weight: bold; transform: scaleX(1.045);">Table:</span>
<span class="t" style="left: 86px; top: 656.3px; font-size: 15px; color: rgb(42, 154, 42); font-weight: bold; transform: scaleX(1.0647);">comment</span>
<span class="t" style="left: 36px; top: 691.3px; font-size: 15px; color: rgb(17, 17, 17); font-weight: bold; transform: scaleX(1.012);">Columns:</span>
<span class="t" style="left: 54px; top: 708.7px; font-size: 14.5px; color: rgb(17, 17, 17); font-weight: bold; transform: scaleX(1.1248);">id</span>
<div class="a" style="left:54px;top:723.0px;width:14.5px;height:1.3px;background:#111;"></div>
<span class="t" style="left: 126.3px; top: 708.7px; font-size: 14.5px; color: rgb(128, 128, 128); transform: scaleX(1.0787);">int AI PK</span>
<span class="t" style="left: 54px; top: 725.5px; font-size: 14.5px; color: rgb(17, 17, 17); transform: scaleX(1.005);">user_id</span>
<span class="t" style="left: 126.3px; top: 725.5px; font-size: 14.5px; color: rgb(128, 128, 128); transform: scaleX(1.048);">varchar(45)</span>
<span class="t" style="left: 54px; top: 742.2px; font-size: 14.5px; color: rgb(17, 17, 17); transform: scaleX(1.0692);">vote_id</span>
<span class="t" style="left: 126.3px; top: 742.2px; font-size: 14.5px; color: rgb(128, 128, 128); transform: scaleX(1.048);">varchar(45)</span>
<span class="t" style="left: 54px; top: 759px; font-size: 14.5px; color: rgb(17, 17, 17); transform: scaleX(1.1455);">content</span>
<span class="t" style="left: 126.3px; top: 759px; font-size: 14.5px; color: rgb(128, 128, 128); transform: scaleX(1.048);">varchar(45)</span>
<span class="t" style="left: 54px; top: 775.8px; font-size: 14.5px; color: rgb(17, 17, 17); transform: scaleX(0.9305);">likes</span>
<span class="t" style="left: 126.3px; top: 775.8px; font-size: 14.5px; color: rgb(128, 128, 128); transform: scaleX(1.048);">varchar(45)</span>
<span class="t" style="left: 54px; top: 792.5px; font-size: 14.5px; color: rgb(17, 17, 17); transform: scaleX(1.0436);">time</span>
<span class="t" style="left: 126.3px; top: 792.5px; font-size: 14.5px; color: rgb(128, 128, 128); transform: scaleX(1.048);">varchar(45)</span>
<div class="a" style="left:8px;top:988px;width:250px;height:24px;background:#e6e6e7;"></div>
<div class="a" style="left:8px;top:988px;width:90px;height:24px;background:#ffffff;"></div>
<span class="t" style="left: 16px; top: 993.1px; font-size: 14px; color: rgb(45, 134, 214); transform: scaleX(1.0192);">Object Info</span>
<span class="t" style="left: 107px; top: 993.1px; font-size: 14px; color: rgb(42, 42, 42); transform: scaleX(0.9636);">Session</span>
<div class="a" style="left:265px;top:133px;width:1348px;height:24px;background:#e8e8e9;"></div>
<div class="a" style="left:265px;top:156px;width:1348px;height:3px;background:#0a72cc;"></div>
<span class="t" style="left: 273.8px; top: 137.1px; font-size: 14px; color: rgb(42, 42, 42); transform: scaleX(0.9726);">comment</span>
<span class="t" style="left: 370.3px; top: 137.1px; font-size: 14px; color: rgb(42, 42, 42); transform: scaleX(0.9989);">SQL File 4*</span>
<span class="t" style="left: 480.5px; top: 137.1px; font-size: 14px; color: rgb(42, 42, 42); transform: scaleX(0.9989);">SQL File 5*</span>
<span class="t" style="left: 590.2px; top: 137.1px; font-size: 14px; color: rgb(42, 42, 42); transform: scaleX(1.0026);">comment - Table</span>
<div class="a" style="left:725px;top:133px;width:96px;height:24px;background:#0a72cc;"></div>
<span class="t" style="left: 734.3px; top: 137.1px; font-size: 14px; color: rgb(255, 255, 255); transform: scaleX(0.9674);">comment</span>
<svg class="a" style="left:803px;top:141px;" width="10" height="10" viewBox="0 0 10 10"><path d="M1 1L9 9M9 1L1 9" stroke="#e8f0fa" stroke-width="1.3"></path></svg>
<div class="a" style="left:265px;top:159px;width:1348px;height:34px;background:linear-gradient(#ffffff,#f0f0f0);"></div>
<svg class="a" style="left:280px;top:165px;" width="24" height="21" viewBox="0 0 24 21"><defs><linearGradient id="fg" x1="0" y1="0" x2="0" y2="1"><stop offset="0" stop-color="#c3dbee"></stop><stop offset="1" stop-color="#8db2d2"></stop></linearGradient></defs><path d="M1.5 3.5a1.5 1.5 0 0 1 1.5-1.5h5l2 2h10a1.5 1.5 0 0 1 1.5 1.5v13a1.5 1.5 0 0 1-1.5 1.5H3a1.5 1.5 0 0 1-1.5-1.5z" fill="url(#fg)" stroke="#7b9cbb" stroke-width="1"></path></svg>
<svg class="a" style="left:315px;top:166px;" width="19" height="20" viewBox="0 0 19 20"><rect x="1" y="1.5" width="16.5" height="16.5" rx="1.5" fill="#4f7fa6" stroke="#3e6688" stroke-width="1"></rect><rect x="4" y="2.5" width="10.5" height="6.5" fill="#fff"></rect><rect x="5" y="12.5" width="8.5" height="5" fill="#e8eef3"></rect><rect x="10" y="13.5" width="2" height="3" fill="#4f7fa6"></rect></svg>
<div class="a" style="left:346px;top:168px;width:1px;height:17px;background:#b5b5b5;"></div>
<svg class="a" style="left:352px;top:164px;" width="26" height="24" viewBox="0 0 26 24"><defs><linearGradient id="bg" x1="0" y1="0" x2="0" y2="1"><stop offset="0" stop-color="#fbe98a"></stop><stop offset="1" stop-color="#d9ad2b"></stop></linearGradient></defs><path d="M9 1.5H19.5L14.5 9H19L6 22.5L9.5 12.5H5.5Z" fill="url(#bg)" stroke="#a8842a" stroke-width="1" stroke-linejoin="round"></path></svg>
<svg class="a" style="left:386px;top:164px;" width="26" height="24" viewBox="0 0 26 24"><defs><linearGradient id="bg" x1="0" y1="0" x2="0" y2="1"><stop offset="0" stop-color="#fbe98a"></stop><stop offset="1" stop-color="#d9ad2b"></stop></linearGradient></defs><path d="M9 1.5H19.5L14.5 9H19L6 22.5L9.5 12.5H5.5Z" fill="url(#bg)" stroke="#a8842a" stroke-width="1" stroke-linejoin="round"></path><rect x="12.5" y="10" width="3" height="11" fill="#e6e6e6" stroke="#444" stroke-width="0.9"></rect><path d="M11 10h6M11 21h6" stroke="#444" stroke-width="1.5"></path></svg>
<svg class="a" style="left:419px;top:164px;" width="26" height="24" viewBox="0 0 26 24"><defs><linearGradient id="bg" x1="0" y1="0" x2="0" y2="1"><stop offset="0" stop-color="#fbe98a"></stop><stop offset="1" stop-color="#d9ad2b"></stop></linearGradient></defs><path d="M9 1.5H19.5L14.5 9H19L6 22.5L9.5 12.5H5.5Z" fill="url(#bg)" stroke="#a8842a" stroke-width="1" stroke-linejoin="round"></path><circle cx="12" cy="10.5" r="6.5" fill="#cfe0ef" fill-opacity="0.8" stroke="#555" stroke-width="2"></circle><path d="M16.5 15l5 5" stroke="#555" stroke-width="2.6"></path></svg>
<svg class="a" style="left:455px;top:164px;" width="24" height="24" viewBox="0 0 24 24"><path d="M7 1.5h10l5.5 5.5v10l-5.5 5.5H7l-5.5-5.5V7z" fill="#d0d0d0"></path><path d="M8.5 17V9.5M11 15V6.5M13.5 15V6.5M16 15V8M8.5 17c1 3 7 3 8.5-1" stroke="#f2f2f2" stroke-width="1.7" fill="none" stroke-linecap="round"></path></svg>
<div class="a" style="left:489px;top:168px;width:1px;height:17px;background:#b5b5b5;"></div>
<div class="a" style="left:495px;top:163px;width:29px;height:28px;background:transparent;border:2px solid #1a78d2"></div>
<svg class="a" style="left:497px;top:165px;" width="25" height="24" viewBox="0 0 25 24"><rect x="1" y="1" width="21" height="21" rx="3.5" fill="#cfcfcf" stroke="#b0b0b0"></rect><circle cx="7.5" cy="7.5" r="4.5" fill="#d12f3c"></circle><path d="M5.5 5.5l4 4M9.5 5.5l-4 4" stroke="#fff" stroke-width="1.3"></path><circle cx="14.5" cy="14" r="5.8" fill="#e04a2a"></circle><path d="M12 16.5v-5M14 16v-5.5M16 16v-4" stroke="#fff" stroke-width="1.5"></path><circle cx="18.5" cy="3.8" r="1.2" fill="#5bd04a"></circle><path d="M4 13v4h4" stroke="#555" stroke-width="1" fill="none"></path></svg>
<div class="a" style="left:530px;top:168px;width:1px;height:17px;background:#b5b5b5;"></div>
<svg class="a" style="left:538px;top:164px;" width="24" height="24" viewBox="0 0 24 24"><circle cx="11.5" cy="11.5" r="10.5" fill="#c6c6c6"></circle><path d="M6.5 12l3.5 3.5 7-7" stroke="#fff" stroke-width="2.6" fill="none"></path></svg>
<svg class="a" style="left:572px;top:164px;" width="24" height="24" viewBox="0 0 24 24"><circle cx="11.5" cy="11.5" r="10.5" fill="#c6c6c6"></circle><path d="M7.5 7.5l8 8M15.5 7.5l-8 8" stroke="#fff" stroke-width="2.6"></path></svg>
<div class="a" style="left:604px;top:163px;width:28px;height:28px;background:transparent;border:2px solid #1a78d2"></div>
<svg class="a" style="left:606px;top:165px;" width="25" height="24" viewBox="0 0 25 24"><rect x="1" y="1" width="21" height="21" rx="3.5" fill="#cfcfcf" stroke="#b0b0b0"></rect><path d="M9 3h6l-3 5h3l-8 8 2.5-6H6z" fill="#f0d255" stroke="#b69532" stroke-width="0.7"></path><circle cx="14" cy="15" r="5.5" fill="#4c8fe0"></circle><path d="M11.5 15l2 2 3.5-3.5" stroke="#fff" stroke-width="1.4" fill="none"></path><circle cx="18.8" cy="3.8" r="1.2" fill="#5bd04a"></circle></svg>
<div class="a" style="left:639px;top:168px;width:1px;height:17px;background:#b5b5b5;"></div>
<div class="a" style="left:645px;top:163px;width:151px;height:26px;background:#ffffff;"></div>
<span class="t" style="left: 650.2px; top: 169.6px; font-size: 14px; color: rgb(17, 17, 17); transform: scaleX(0.9242);">Limit to 1000 rows</span>
<svg class="a" style="left:783px;top:173px;" width="10" height="6" viewBox="0 0 10 6"><path d="M0.5 0.5h9L5 5.5z" fill="#111"></path></svg>
<div class="a" style="left:802px;top:168px;width:1px;height:17px;background:#b5b5b5;"></div>
<svg class="a" style="left:811px;top:166px;" width="26" height="22" viewBox="0 0 26 22"><path d="M11 1l3 6.3 6.8.8-5 4.7 1.3 6.7L11 16.2 5 19.5l1.3-6.7-5-4.7L8 7.3z" fill="#f3c035" stroke="#c98f1b" stroke-width="0.8"></path><path d="M14.5 15.5h9M19 11v9" stroke="#6cbf3a" stroke-width="3.6"></path><path d="M14.5 15.5h9M19 11v9" stroke="#9ee06a" stroke-width="1.6"></path></svg>
<div class="a" style="left:844px;top:168px;width:1px;height:17px;background:#b5b5b5;"></div>
<svg class="a" style="left:851px;top:166px;" width="24" height="22" viewBox="0 0 24 22"><path d="M16 6l5-5" stroke="#8d5d2a" stroke-width="2.5" stroke-linecap="round"></path><path d="M14 4l5 5-3 3-8 7c-2 1-6 0-7-2l9-10z" fill="#c8a868" stroke="#7b6034" stroke-width="0.8"></path><path d="M4 15l7-6M6 17l7-6M9 18l6-5" stroke="#f0d9a0" stroke-width="1"></path><ellipse cx="12" cy="21" rx="9" ry="1" fill="#ddd"></ellipse></svg>
<svg class="a" style="left:885px;top:166px;" width="24" height="22" viewBox="0 0 24 22"><circle cx="9" cy="9" r="7.3" fill="#f6f6f6" stroke="#666" stroke-width="1.8"></circle><path d="M6.5 12l2.5-6.5 2.5 6.5M7.3 10h3.4" stroke="#888" stroke-width="1" fill="none"></path><path d="M14 14l6 6" stroke="#666" stroke-width="2.5"></path></svg>
<svg class="a" style="left:919px;top:164px;" width="23" height="24" viewBox="0 0 23 24"><rect x="1" y="1" width="20.5" height="21" rx="2.5" fill="#efefef" stroke="#8a8a8a" stroke-width="1.2"></rect><path d="M9.5 18V4.5h6M13 4.5V18" stroke="#333" stroke-width="1.8" fill="none"></path><path d="M9.5 4.5a3.5 3.5 0 0 0 0 7z" fill="#333"></path></svg>
<svg class="a" style="left:952px;top:164px;" width="23" height="24" viewBox="0 0 23 24"><rect x="1" y="1" width="20.5" height="21" rx="2.5" fill="#efefef" stroke="#8a8a8a" stroke-width="1.2"></rect><path d="M5 6.5h8M16 6.5v6.5H7" stroke="#333" stroke-width="1.6" fill="none"></path><path d="M7 10l-3.5 3 3.5 3z" fill="#333"></path></svg>
<div class="a" style="left:265px;top:193px;width:1348px;height:187px;background:#ffffff;"></div>
<div class="a" style="left:352px;top:193px;width:1261px;height:26px;background:#efefef;"></div>
<span class="t" style="left:297px;top:201.8px;font-size:14px;color:#1f7ebf;font-family:'Liberation Mono',monospace;">1</span>
<svg class="a" style="left:314px;top:200px;" width="10" height="10" viewBox="0 0 10 10"><circle cx="4.5" cy="5" r="3.8" fill="#0a84ff"></circle></svg>
<span class="t" style="left: 353px; top: 201px; font-size: 14.4px; color: rgb(30, 30, 30); font-family: &quot;Liberation Mono&quot;, monospace; transform: scaleX(1.0033);"><span style="color:#1b7fc7">SELECT</span> <span style="color:#555">*</span> <span style="color:#1b7fc7">FROM</span> <span style="color:#222">test.</span><span style="color:#1f8fd0">comment</span><span style="color:#222">;</span></span>
<div class="a" style="left:265px;top:380px;width:1348px;height:27px;background:#f0f0f2;"></div>
<div class="a" style="left:286px;top:388px;width:657px;height:2.5px;background:#8a8a8a;"></div>
<div class="a" style="left:1618px;top:133px;width:294px;height:26px;background:#e6e6e7;"></div>
<span class="t" style="left: 1626px; top: 138.6px; font-size: 13.5px; color: rgb(112, 112, 112); transform: scaleX(1.0659);">SQLAdditions</span>
<svg class="a" style="left:1716px;top:142.5px;" width="188" height="7" viewBox="0 0 188 7"><rect x="0" y="0" width="100%" height="7" fill="url(#hdots)"></rect></svg>
<div class="a" style="left:1618px;top:159px;width:294px;height:34px;background:#f3f3f5;"></div>
<svg class="a" style="left:1630px;top:168px;" width="16" height="14" viewBox="0 0 16 14"><path d="M14 1.5v11L2 7z" fill="#b6b6b6"></path></svg>
<svg class="a" style="left:1666px;top:168px;" width="16" height="14" viewBox="0 0 16 14"><path d="M2 1.5v11L14 7z" fill="#b6b6b6"></path></svg>
<div class="a" style="left:1694px;top:167px;width:1.5px;height:18px;background:#8190a8;"></div>
<svg class="a" style="left:1702px;top:164px;" width="25" height="25" viewBox="0 0 25 25"><rect x="1" y="1" width="22" height="22" rx="2" fill="#e4e4e4" stroke="#8a8a8a" stroke-width="1.2"></rect><path d="M6 5h5M6 18h5M8.5 5v13" stroke="#444" stroke-width="1.6"></path><text x="11.5" y="18" font-family="Liberation Sans" font-weight="bold" font-size="11" fill="#444">?</text></svg>
<svg class="a" style="left:1736px;top:164px;" width="24" height="25" viewBox="0 0 24 25"><path d="M6 1h6l-3 5h3L5 12l2-5H4z" fill="#f0cf50" stroke="#a8842a" stroke-width="0.7"></path><path d="M6 9h5M6 21h5M8.5 9v12" stroke="#444" stroke-width="1.6"></path><text x="12" y="22" font-family="Liberation Sans" font-weight="bold" font-size="11" fill="#444">?</text></svg>
<div class="a" style="left:1769px;top:167px;width:1.5px;height:18px;background:#8190a8;"></div>
<div class="a" style="left:1775px;top:163px;width:137px;height:26px;background:#ffffff;"></div>
<span class="t" style="left: 1779px; top: 169.6px; font-size: 14px; color: rgb(17, 17, 17); transform: scaleX(0.9235);">Jump to</span>
<div class="a" style="left:1618px;top:193px;width:294px;height:540px;background:#ffffff;"></div>
<div class="a" style="left:1618px;top:193px;width:294px;height:200px;overflow:hidden">
<span class="t" style="left: 25.2px; top: 16.9px; font-size: 19px; font-weight: bold; color: rgb(126, 126, 126); transform: scaleX(1.1258);">Automatic context help is</span>
<span class="t" style="left: 13.4px; top: 40.4px; font-size: 19px; font-weight: bold; color: rgb(126, 126, 126); transform: scaleX(1.1479);">disabled. Use the toolbar to</span>
<span class="t" style="left: 26px; top: 64.9px; font-size: 19px; font-weight: bold; color: rgb(126, 126, 126); transform: scaleX(1.1504);">manually get help for the</span>
<span class="t" style="left: 18px; top: 89.2px; font-size: 19px; font-weight: bold; color: rgb(126, 126, 126); transform: scaleX(1.1276);">current caret position or to</span>
<span class="t" style="left: 41.7px; top: 112.9px; font-size: 19px; font-weight: bold; color: rgb(126, 126, 126); transform: scaleX(1.1308);">toggle automatic help.</span>
</div>
<div class="a" style="left:1912px;top:133px;width:6px;height:622px;background:#ededf0;"></div>
<div class="a" style="left:1618px;top:731.5px;width:294px;height:23.5px;background:#e6e6e7;"></div>
<div class="a" style="left:1618px;top:731.5px;width:100px;height:23.5px;background:#ffffff;"></div>
<span class="t" style="left: 1627px; top: 737.1px; font-size: 14px; color: rgb(45, 134, 214); transform: scaleX(1.0008);">Context Help</span>
<span class="t" style="left: 1727px; top: 737.1px; font-size: 14px; color: rgb(34, 34, 34); transform: scaleX(0.9911);">Snippets</span>
<div class="a" style="left:265px;top:407px;width:1275px;height:29px;background:#f3f3f5;"></div>
<div class="a" style="left:269px;top:412px;width:1.5px;height:19px;background:#7f8ea6;"></div>
<span class="t" style="left: 279.2px; top: 415.2px; font-size: 13px; color: rgb(34, 34, 34); font-weight: bold; transform: scaleX(0.9661);">Result Grid</span>
<div class="a" style="left:355px;top:412px;width:1.5px;height:19px;background:#7f8ea6;"></div>
<svg class="a" style="left:363px;top:412px;" width="18" height="18" viewBox="0 0 18 18"><rect x="1" y="1" width="15" height="15" fill="#eee" stroke="#8a8a8a"></rect><path d="M1 4.5h15M1 8h15M1 11.5h15M5.5 1v15M11.5 1v15" stroke="#9a9a9a" stroke-width="0.8"></path><rect x="6" y="1" width="5" height="15" fill="#f3d53b" stroke="#d99b12" stroke-width="1.2"></rect></svg>
<svg class="a" style="left:398px;top:412px;" width="22" height="18" viewBox="0 0 22 18"><g transform="scale(1.22)"><path d="M5 7.2Q8.5 8 9.3 13.2" stroke="#2f7fd8" stroke-width="3.6" fill="none"></path><path d="M1.2 7.2L6.3 2.6V11.8Z" fill="#2f7fd8"></path><path d="M12.3 7.8Q9 7 8.4 1.8" stroke="#3a8ae0" stroke-width="3.6" fill="none"></path><path d="M16.8 7.8L11.7 12.4V3.2Z" fill="#3a8ae0"></path></g></svg>
<span class="t" style="left: 429.7px; top: 415.2px; font-size: 13px; color: rgb(34, 34, 34); transform: scaleX(0.9326);">Filter Rows:</span>
<div class="a" style="left:501px;top:409px;width:123px;height:24px;background:#ffffff;border:1px solid #e4e4e4;border-bottom:2px solid #8a8a8a;border-radius:1px"></div>
<div class="a" style="left:630px;top:412px;width:1.5px;height:19px;background:#7f8ea6;"></div>
<span class="t" style="left: 636.8px; top: 415.2px; font-size: 13px; color: rgb(34, 34, 34); transform: scaleX(0.961);">Edit:</span>
<svg class="a" style="left:670px;top:410px;" width="26" height="22" viewBox="0 0 26 22"><rect x="2" y="9.5" width="21" height="11" fill="#5e95d8" stroke="#777" stroke-width="1.5"></rect><path d="M5 18l2-5 11-11 3 3-11 11z" fill="#f1c656" stroke="#8b6c2a" stroke-width="0.8"></path><path d="M18 2l3 3 1.5-1.5-3-3z" fill="#e04a4a"></path></svg>
<svg class="a" style="left:704px;top:412px;" width="26" height="19" viewBox="0 0 26 19"><rect x="1" y="1" width="16" height="15" fill="#f6f6f6" stroke="#9a9a9a"></rect><path d="M1 5h16M1 9h16M1 13h16M6.5 1v15M12 1v15" stroke="#aaa" stroke-width="0.9"></path><rect x="1" y="5" width="16" height="4" fill="#f3cc3a"></rect><path d="M15 12h9M19.5 7.5v9" stroke="#5aa83a" stroke-width="4.2"></path><path d="M15 12h9M19.5 7.5v9" stroke="#a4dc7c" stroke-width="2"></path></svg>
<svg class="a" style="left:738px;top:412px;" width="26" height="19" viewBox="0 0 26 19"><rect x="1" y="1" width="16" height="15" fill="#f6f6f6" stroke="#9a9a9a"></rect><path d="M1 5h16M1 9h16M1 13h16M6.5 1v15M12 1v15" stroke="#aaa" stroke-width="0.9"></path><rect x="1" y="5" width="16" height="4" fill="#f3cc3a"></rect><rect x="12.5" y="10" width="10" height="4.5" fill="#f08a5a" stroke="#c85a2a" stroke-width="1"></rect></svg>
<div class="a" style="left:771.5px;top:412px;width:1.5px;height:19px;background:#7f8ea6;"></div>
<span class="t" style="left: 777.5px; top: 415.2px; font-size: 13px; color: rgb(34, 34, 34); transform: scaleX(1.0448);">Export/Import:</span>
<svg class="a" style="left:871px;top:409px;" width="26" height="24" viewBox="0 0 26 24"><rect x="1" y="1" width="16" height="14" fill="#f3f3f3" stroke="#a0a0a0"></rect><path d="M1 5h16M1 9h16M1 13h16M6.5 1v15M12 1v15" stroke="#b0b0b0" stroke-width="0.9"></path><rect x="9" y="8.5" width="14.5" height="14" rx="1.5" fill="#4f7fa6" stroke="#3e6688"></rect><rect x="11.5" y="9.5" width="9" height="5" fill="#fff"></rect><rect x="13" y="18" width="6" height="4" fill="#e8eef3"></rect></svg>
<svg class="a" style="left:905px;top:409px;" width="26" height="24" viewBox="0 0 26 24"><rect x="1" y="1" width="16" height="14" fill="#f3f3f3" stroke="#a0a0a0"></rect><path d="M1 5h16M1 9h16M1 13h16M6.5 1v15M12 1v15" stroke="#b0b0b0" stroke-width="0.9"></path><path d="M5 10.5h6l1.5 1.5H24v11H5z" fill="#8fb5d6" stroke="#6d93b5"></path><path d="M14.5 21v-5M11.5 17l3-3 3 3" stroke="#e6f0f8" stroke-width="1.4" fill="none"></path></svg>
<div class="a" style="left:939px;top:412px;width:1.5px;height:19px;background:#7f8ea6;"></div>
<span class="t" style="left: 945.3px; top: 415.2px; font-size: 13px; color: rgb(34, 34, 34); transform: scaleX(0.9791);">Wrap Cell Content:</span>
<svg class="a" style="left:1065px;top:414px;" width="16" height="16" viewBox="0 0 16 16"><path d="M1 1.5h13M1 14.5h13" stroke="#3b4a63" stroke-width="1.4"></path><path d="M3.5 2v12" stroke="#3b4a63" stroke-width="1.3"></path><path d="M1.5 5l2-2.5 2 2.5M1.5 11l2 2.5 2-2.5" fill="#3b4a63"></path><path d="M7 13l3-10 3 10M8 10h4" stroke="#3b4a63" stroke-width="1" fill="none"></path></svg>
<svg class="a" style="left:1512px;top:410px;" width="20" height="20" viewBox="0 0 20 20"><rect x="1.5" y="1.5" width="17" height="17" fill="#fff" stroke="#333" stroke-width="1.6"></rect><rect x="10" y="2" width="8" height="16" fill="#555"></rect></svg>
<div class="a" style="left:265px;top:436px;width:1275px;height:294px;background:#ffffff;"></div>
<div class="a" style="left:265px;top:436px;width:508px;height:2px;background:#c9c9c9;"></div>
<div class="a" style="left:265px;top:436px;width:1.5px;height:110px;background:#b8b8b8;"></div>
<div class="a" style="left:265px;top:460px;width:508px;height:2px;background:#c4c4c4;"></div>
<div class="a" style="left:296.5px;top:438px;width:1px;height:22px;background:#e0e0e0;"></div>
<div class="a" style="left:346.6px;top:438px;width:1px;height:22px;background:#e0e0e0;"></div>
<div class="a" style="left:411.6px;top:438px;width:1px;height:22px;background:#e0e0e0;"></div>
<div class="a" style="left:478px;top:438px;width:1px;height:22px;background:#e0e0e0;"></div>
<div class="a" style="left:573.2px;top:438px;width:1px;height:22px;background:#e0e0e0;"></div>
<div class="a" style="left:623.3px;top:438px;width:1px;height:22px;background:#e0e0e0;"></div>
<div class="a" style="left:772px;top:438px;width:1px;height:22px;background:#e0e0e0;"></div>
<div class="a" style="left:296px;top:438px;width:1.5px;height:108px;background:#b8b8b8;"></div>
<div class="a" style="left:265px;top:482.5px;width:32px;height:1px;background:#d3d3d3;"></div>
<div class="a" style="left:298.0px;top:483px;width:48.60000000000002px;height:21px;background:#eaf2fc;"></div>
<div class="a" style="left:348.1px;top:483px;width:63.5px;height:21px;background:#eaf2fc;"></div>
<div class="a" style="left:413.1px;top:483px;width:64.89999999999998px;height:21px;background:#eaf2fc;"></div>
<div class="a" style="left:479.5px;top:483px;width:93.70000000000005px;height:21px;background:#eaf2fc;"></div>
<div class="a" style="left:574.7px;top:483px;width:48.59999999999991px;height:21px;background:#eaf2fc;"></div>
<div class="a" style="left:624.8px;top:483px;width:148.20000000000005px;height:21px;background:#eaf2fc;"></div>
<div class="a" style="left:265px;top:503.5px;width:32px;height:1px;background:#d3d3d3;"></div>
<div class="a" style="left:265px;top:524.5px;width:32px;height:1px;background:#d3d3d3;"></div>
<div class="a" style="left:298.0px;top:525px;width:48.60000000000002px;height:21px;background:#eaf2fc;"></div>
<div class="a" style="left:348.1px;top:525px;width:63.5px;height:21px;background:#eaf2fc;"></div>
<div class="a" style="left:413.1px;top:525px;width:64.89999999999998px;height:21px;background:#eaf2fc;"></div>
<div class="a" style="left:479.5px;top:525px;width:93.70000000000005px;height:21px;background:#eaf2fc;"></div>
<div class="a" style="left:574.7px;top:525px;width:48.59999999999991px;height:21px;background:#eaf2fc;"></div>
<div class="a" style="left:624.8px;top:525px;width:148.20000000000005px;height:21px;background:#eaf2fc;"></div>
<div class="a" style="left:265px;top:546px;width:32px;height:1px;background:#d3d3d3;"></div>
<span class="t" style="left: 305px; top: 442.6px; font-size: 13.5px; color: rgb(30, 30, 30); transform: scaleX(0.9985);">id</span>
<span class="t" style="left: 355.4px; top: 442.6px; font-size: 13.5px; color: rgb(30, 30, 30); transform: scaleX(0.9846);">user_id</span>
<span class="t" style="left: 420.7px; top: 442.6px; font-size: 13.5px; color: rgb(30, 30, 30); transform: scaleX(1.0173);">vote_id</span>
<span class="t" style="left: 486.8px; top: 442.6px; font-size: 13.5px; color: rgb(30, 30, 30); transform: scaleX(1.0384);">content</span>
<span class="t" style="left: 581.4px; top: 442.6px; font-size: 13.5px; color: rgb(30, 30, 30); transform: scaleX(0.9402);">likes</span>
<span class="t" style="left: 632.5px; top: 442.6px; font-size: 13.5px; color: rgb(30, 30, 30); transform: scaleX(0.9406);">time</span>
<svg class="a" style="left:272px;top:467px;" width="10" height="12" viewBox="0 0 10 12"><path d="M1 0.5L9 6 1 11.5z" fill="#222"></path></svg>
<svg class="a" style="left:274px;top:533px;" width="10" height="10" viewBox="0 0 10 10"><path d="M5 1v8M1.5 3l7 4M8.5 3l-7 4" stroke="#333" stroke-width="1.6"></path></svg>
<span class="t" style="left:302px;top:466.0px;font-size:13.5px;color:#111;">1</span>
<div class="a" style="left:347.6px;top:462.5px;width:27.5px;height:10.5px;background:#777a7d"></div>
<span class="t" style="left: 349.8px; top: 463.8px; font-size: 9px; color: rgb(242, 242, 242); font-weight: bold; transform: scaleX(0.9583);">NULL</span>
<div class="a" style="left:412.3px;top:462.5px;width:27.5px;height:10.5px;background:#777a7d"></div>
<span class="t" style="left: 414.5px; top: 463.8px; font-size: 9px; color: rgb(242, 242, 242); font-weight: bold; transform: scaleX(0.9583);">NULL</span>
<span class="t" style="left:482.7px;top:466.4px;font-size:13px;color:#111;">안녕하세요!</span>
<span class="t" style="left:576.6px;top:466.0px;font-size:13.5px;color:#111;">0</span>
<span class="t" style="left: 627.4px; top: 466px; font-size: 13.5px; color: rgb(17, 17, 17); transform: scaleX(1.0381);">2023.12.01 19:47:22</span>
<span class="t" style="left:302px;top:487.0px;font-size:13.5px;color:#111;">2</span>
<div class="a" style="left:347.6px;top:483.5px;width:27.5px;height:10.5px;background:#777a7d"></div>
<span class="t" style="left: 349.8px; top: 484.8px; font-size: 9px; color: rgb(242, 242, 242); font-weight: bold; transform: scaleX(0.9583);">NULL</span>
<div class="a" style="left:412.3px;top:483.5px;width:27.5px;height:10.5px;background:#777a7d"></div>
<span class="t" style="left: 414.5px; top: 484.8px; font-size: 9px; color: rgb(242, 242, 242); font-weight: bold; transform: scaleX(0.9583);">NULL</span>
<span class="t" style="left:482.7px;top:487.4px;font-size:13px;color:#111;">반갑습니다</span>
<span class="t" style="left:576.6px;top:487.0px;font-size:13.5px;color:#111;">0</span>
<span class="t" style="left: 627.4px; top: 487px; font-size: 13.5px; color: rgb(17, 17, 17); transform: scaleX(1.0466);">2023.12.01 19:50:11</span>
<span class="t" style="left:302px;top:508.6px;font-size:13.5px;color:#111;">3</span>
<div class="a" style="left:347.6px;top:504.5px;width:27.5px;height:10.5px;background:#777a7d"></div>
<span class="t" style="left: 349.8px; top: 505.8px; font-size: 9px; color: rgb(242, 242, 242); font-weight: bold; transform: scaleX(0.9583);">NULL</span>
<div class="a" style="left:412.3px;top:504.5px;width:27.5px;height:10.5px;background:#777a7d"></div>
<span class="t" style="left: 414.5px; top: 505.8px; font-size: 9px; color: rgb(242, 242, 242); font-weight: bold; transform: scaleX(0.9583);">NULL</span>
<span class="t" style="left:482.7px;top:509.0px;font-size:13px;color:#111;">테스트</span>
<span class="t" style="left:576.6px;top:508.6px;font-size:13.5px;color:#111;">0</span>
<span class="t" style="left: 627.4px; top: 508.6px; font-size: 13.5px; color: rgb(17, 17, 17); transform: scaleX(1.0381);">2023.12.01 19:50:29</span>
<div class="a" style="left:297.5px;top:525.4px;width:27.5px;height:10.5px;background:#777a7d"></div>
<span class="t" style="left: 299.7px; top: 526.7px; font-size: 9px; color: rgb(242, 242, 242); font-weight: bold; transform: scaleX(0.9583);">NULL</span>
<div class="a" style="left:347.6px;top:525.4px;width:27.5px;height:10.5px;background:#777a7d"></div>
<span class="t" style="left: 349.8px; top: 526.7px; font-size: 9px; color: rgb(242, 242, 242); font-weight: bold; transform: scaleX(0.9583);">NULL</span>
<div class="a" style="left:412.3px;top:525.4px;width:27.5px;height:10.5px;background:#777a7d"></div>
<span class="t" style="left: 414.5px; top: 526.7px; font-size: 9px; color: rgb(242, 242, 242); font-weight: bold; transform: scaleX(0.9583);">NULL</span>
<div class="a" style="left:478.9px;top:525.4px;width:27.5px;height:10.5px;background:#777a7d"></div>
<span class="t" style="left: 481.1px; top: 526.7px; font-size: 9px; color: rgb(242, 242, 242); font-weight: bold; transform: scaleX(0.9583);">NULL</span>
<div class="a" style="left:573.9px;top:525.4px;width:27.5px;height:10.5px;background:#777a7d"></div>
<span class="t" style="left: 576.1px; top: 526.7px; font-size: 9px; color: rgb(242, 242, 242); font-weight: bold; transform: scaleX(0.9583);">NULL</span>
<div class="a" style="left:624px;top:525.4px;width:27.5px;height:10.5px;background:#777a7d"></div>
<span class="t" style="left: 626.2px; top: 526.7px; font-size: 9px; color: rgb(242, 242, 242); font-weight: bold; transform: scaleX(0.9583);">NULL</span>
<div class="a" style="left:1540px;top:407px;width:72px;height:323px;background:#e4e4e6;"></div>
<div class="a" style="left:1540px;top:407px;width:72px;height:84px;background:#0a74d2;"></div>
<svg class="a" style="left:1540px;top:442px;" width="12" height="22" viewBox="0 0 12 22"><path d="M0 0L11 11 0 22z" fill="#ffffff"></path></svg>
<svg class="a" style="left:1559px;top:411px;" width="36" height="37" viewBox="0 0 36 37"><rect x="2" y="1" width="32.5" height="35" rx="2" fill="#f2f2f2"></rect><rect x="4.5" y="5.5" width="27.5" height="28" fill="#0b3360"></rect><path d="M6 9.5h5M15 9.5h6M24 9.5h6M6 14.5h5M15 14.5h6M24 14.5h6M6 19.5h5M15 19.5h6M24 19.5h6M6 24.5h5M15 24.5h6M24 24.5h6M6 29.5h5M15 29.5h6M24 29.5h6" stroke="#f4f4f4" stroke-width="2.2"></path></svg>
<span class="t" style="left: 1559.5px; top: 455.9px; font-size: 12.5px; color: rgb(255, 255, 255); transform: scaleX(0.9312);">Result</span>
<span class="t" style="left: 1564px; top: 467.9px; font-size: 12.5px; color: rgb(255, 255, 255); transform: scaleX(0.9735);">Grid</span>
<svg class="a" style="left:1559px;top:497px;" width="36" height="37" viewBox="0 0 36 37"><rect x="1.5" y="1.5" width="33" height="34" rx="2" fill="#ececec" stroke="#d9d9d9" stroke-width="1.2"></rect><path d="M5 6.5h26M6 12h8M16 10.5h15v4H16zM6 19h8M16 17.5h15v4H16zM6 26h8" stroke="#c9c9c9" stroke-width="1.2" fill="none"></path></svg>
<span class="t" style="left: 1560.5px; top: 539.4px; font-size: 12.5px; color: rgb(85, 85, 85); transform: scaleX(0.9941);">Form</span>
<span class="t" style="left: 1559px; top: 552.4px; font-size: 12.5px; color: rgb(85, 85, 85); transform: scaleX(1.0411);">Editor</span>
<svg class="a" style="left:1559px;top:580px;" width="42" height="40" viewBox="0 0 42 40"><rect x="1.5" y="3.5" width="33" height="34" rx="2" fill="#ececec" stroke="#d9d9d9" stroke-width="1.2"></rect><path d="M5 9h26M5 14h26M5 19h26M5 24h26M5 29h26M12 6v28" stroke="#c9c9c9" stroke-width="1.2"></path><circle cx="27" cy="11" r="6" fill="#ececec" stroke="#cfcfcf" stroke-width="2"></circle><path d="M31 15.5l6 6" stroke="#cfcfcf" stroke-width="2.5"></path></svg>
<span class="t" style="left: 1561px; top: 626.9px; font-size: 12.5px; color: rgb(85, 85, 85); transform: scaleX(1.0334);">Field</span>
<span class="t" style="left: 1559.5px; top: 637.9px; font-size: 12.5px; color: rgb(85, 85, 85); transform: scaleX(0.9892);">Types</span>
<svg class="a" style="left:1562px;top:688px;" width="28" height="40" viewBox="0 0 28 40"><path d="M3 14l11-10 11 10" stroke="#d2d2d2" stroke-width="3.5" fill="none"></path><path d="M3 25l11 10 11-10" stroke="#c2c2c2" stroke-width="3.5" fill="none"></path></svg>
<div class="a" style="left:265px;top:730px;width:1348px;height:1.5px;background:#ededf0;"></div>
<div class="a" style="left:265px;top:731.5px;width:1348px;height:23.5px;background:#e6e6e7;"></div>
<div class="a" style="left:265px;top:731.5px;width:107px;height:23.5px;background:#ffffff;"></div>
<span class="t" style="left: 274px; top: 737.6px; font-size: 13.5px; color: rgb(45, 134, 214); transform: scaleX(1.0182);">comment 5</span>
<svg class="a" style="left:353px;top:739px;" width="11" height="11" viewBox="0 0 11 11"><path d="M1.5 1.5l8 8M9.5 1.5l-8 8" stroke="#444" stroke-width="1.3"></path></svg>
<div class="a" style="left:1442px;top:735px;width:78px;height:18px;background:#f7f7f7;border-radius:2px"></div>
<span class="t" style="left: 1466px; top: 738.4px; font-size: 12.5px; color: rgb(138, 138, 138); transform: scaleX(0.991);">Apply</span>
<div class="a" style="left:1530px;top:735px;width:81px;height:18px;background:#f7f7f7;border-radius:2px"></div>
<span class="t" style="left: 1552.5px; top: 738.4px; font-size: 12.5px; color: rgb(122, 122, 122); transform: scaleX(0.9639);">Revert</span>
<div class="a" style="left:265px;top:764px;width:1647px;height:26px;background:#e6e6e7;"></div>
<span class="t" style="left: 273px; top: 770.6px; font-size: 13.5px; color: rgb(112, 112, 112); transform: scaleX(1.0856);">Output</span>
<svg class="a" style="left:319px;top:774.5px;" width="1585" height="7" viewBox="0 0 1585 7"><rect x="0" y="0" width="100%" height="7" fill="url(#hdots)"></rect></svg>
<div class="a" style="left:265px;top:790px;width:1647px;height:34px;background:#f3f3f5;"></div>
<svg class="a" style="left:274px;top:797px;" width="20" height="21" viewBox="0 0 20 21"><rect x="1" y="6" width="12" height="13" fill="#f3f3f5" stroke="#444" stroke-width="1.5"></rect><path d="M5 2.5h12.5v13" stroke="#444" stroke-width="1.5" fill="none"></path><path d="M8 4.5h8v10" stroke="#888" stroke-width="1" fill="none"></path></svg>
<div class="a" style="left:300px;top:794px;width:187px;height:26px;background:#ffffff;"></div>
<div class="a" style="left:472px;top:795px;width:15px;height:24px;background:#ececec;"></div>
<span class="t" style="left: 305px; top: 800.6px; font-size: 14px; color: rgb(17, 17, 17); transform: scaleX(0.9431);">Action Output</span>
<svg class="a" style="left:475px;top:804px;" width="9" height="6" viewBox="0 0 9 6"><path d="M0.5 0.5h8L4.5 5z" fill="#111"></path></svg>
<div class="a" style="left:265px;top:824px;width:1627px;height:188px;background:#ffffff;"></div>
<div class="a" style="left:1892px;top:824px;width:20px;height:188px;background:#f0f0f2;"></div>
<div class="a" style="left:1900px;top:970px;width:3px;height:22px;background:#8a8a8a;"></div>
<div class="a" style="left:291.5px;top:826px;width:1px;height:18px;background:#d8d8d8;"></div>
<div class="a" style="left:336.5px;top:826px;width:1px;height:18px;background:#d8d8d8;"></div>
<div class="a" style="left:400px;top:826px;width:1px;height:18px;background:#d8d8d8;"></div>
<div class="a" style="left:1073.4px;top:826px;width:1px;height:18px;background:#d8d8d8;"></div>
<div class="a" style="left:1748.7px;top:826px;width:1px;height:18px;background:#d8d8d8;"></div>
<div class="a" style="left:1889.8px;top:826px;width:1px;height:18px;background:#d8d8d8;"></div>
<span class="t" style="left:300.2px;top:829.0px;font-size:12.5px;color:#222;">#</span>
<span class="t" style="left: 345.3px; top: 829px; font-size: 12.5px; color: rgb(34, 34, 34); transform: scaleX(0.988);">Time</span>
<span class="t" style="left: 408.7px; top: 829px; font-size: 12.5px; color: rgb(34, 34, 34); transform: scaleX(1.0072);">Action</span>
<span class="t" style="left: 1083.3px; top: 829px; font-size: 12.5px; color: rgb(34, 34, 34); transform: scaleX(0.9264);">Message</span>
<span class="t" style="left: 1757.7px; top: 829px; font-size: 12.5px; color: rgb(34, 34, 34); transform: scaleX(1.0007);">Duration / Fetch</span>
<svg class="a" style="left:270px;top:851.9px;" width="16" height="16" viewBox="0 0 16 16"><circle cx="8" cy="8" r="6.8" fill="#1e9e32" stroke="#137a22" stroke-width="0.8"></circle><path d="M4.8 8.2l2.3 2.2 4.2-4.2" stroke="#fff" stroke-width="2" fill="none"></path></svg>
<span class="t" style="left: 316px; top: 850.6px; font-size: 14.5px; color: rgb(17, 17, 17); transform: scaleX(0.9045);">53</span>
<span class="t" style="left: 342px; top: 850.6px; font-size: 14.5px; color: rgb(17, 17, 17); transform: scaleX(0.9034);">19:46:40</span>
<span class="t" style="left: 405.2px; top: 850.6px; font-size: 14.5px; color: rgb(17, 17, 17); transform: scaleX(0.9184);">SELECT * FROM test.comment LIMIT 0, 1000</span>
<span class="t" style="left: 1078.8px; top: 850.6px; font-size: 14.5px; color: rgb(17, 17, 17); transform: scaleX(0.884);">0 row(s) returned</span>
<span class="t" style="left: 1753.2px; top: 850.6px; font-size: 14.5px; color: rgb(17, 17, 17); transform: scaleX(0.9489);">0.016 sec / 0.000 sec</span>
<div class="a" style="left:266px;top:875.7px;width:25.5px;height:27px;background:#eaf2fc;"></div>
<div class="a" style="left:293.0px;top:875.7px;width:43.5px;height:27px;background:#eaf2fc;"></div>
<div class="a" style="left:338.0px;top:875.7px;width:62.0px;height:27px;background:#eaf2fc;"></div>
<div class="a" style="left:401.5px;top:875.7px;width:671.9000000000001px;height:27px;background:#eaf2fc;"></div>
<div class="a" style="left:1074.9px;top:875.7px;width:673.8px;height:27px;background:#eaf2fc;"></div>
<div class="a" style="left:1750.2px;top:875.7px;width:139.5999999999999px;height:27px;background:#eaf2fc;"></div>
<svg class="a" style="left:270px;top:880.6px;" width="16" height="16" viewBox="0 0 16 16"><circle cx="8" cy="8" r="6.8" fill="#1e9e32" stroke="#137a22" stroke-width="0.8"></circle><path d="M4.8 8.2l2.3 2.2 4.2-4.2" stroke="#fff" stroke-width="2" fill="none"></path></svg>
<span class="t" style="left: 316px; top: 879.3px; font-size: 14.5px; color: rgb(17, 17, 17); transform: scaleX(0.9045);">54</span>
<span class="t" style="left: 342px; top: 879.3px; font-size: 14.5px; color: rgb(17, 17, 17); transform: scaleX(0.9034);">19:46:50</span>
<span class="t" style="left: 405.2px; top: 879.3px; font-size: 14.5px; color: rgb(17, 17, 17); transform: scaleX(0.9184);">SELECT * FROM test.comment LIMIT 0, 1000</span>
<span class="t" style="left: 1078.8px; top: 879.3px; font-size: 14.5px; color: rgb(17, 17, 17); transform: scaleX(0.884);">0 row(s) returned</span>
<span class="t" style="left: 1753.2px; top: 879.3px; font-size: 14.5px; color: rgb(17, 17, 17); transform: scaleX(0.9489);">0.000 sec / 0.000 sec</span>
<svg class="a" style="left:270px;top:909.3px;" width="16" height="16" viewBox="0 0 16 16"><circle cx="8" cy="8" r="6.8" fill="#1e9e32" stroke="#137a22" stroke-width="0.8"></circle><path d="M4.8 8.2l2.3 2.2 4.2-4.2" stroke="#fff" stroke-width="2" fill="none"></path></svg>
<span class="t" style="left: 316px; top: 908px; font-size: 14.5px; color: rgb(17, 17, 17); transform: scaleX(0.9045);">55</span>
<span class="t" style="left: 342px; top: 908px; font-size: 14.5px; color: rgb(17, 17, 17); transform: scaleX(0.9034);">19:48:36</span>
<span class="t" style="left: 405.2px; top: 908px; font-size: 14.5px; color: rgb(17, 17, 17); transform: scaleX(0.9184);">SELECT * FROM test.comment LIMIT 0, 1000</span>
<span class="t" style="left: 1078.8px; top: 908px; font-size: 14.5px; color: rgb(17, 17, 17); transform: scaleX(0.884);">1 row(s) returned</span>
<span class="t" style="left: 1753.2px; top: 908px; font-size: 14.5px; color: rgb(17, 17, 17); transform: scaleX(0.9489);">0.000 sec / 0.000 sec</span>
<div class="a" style="left:266px;top:933.1px;width:25.5px;height:27px;background:#eaf2fc;"></div>
<div class="a" style="left:293.0px;top:933.1px;width:43.5px;height:27px;background:#eaf2fc;"></div>
<div class="a" style="left:338.0px;top:933.1px;width:62.0px;height:27px;background:#eaf2fc;"></div>
<div class="a" style="left:401.5px;top:933.1px;width:671.9000000000001px;height:27px;background:#eaf2fc;"></div>
<div class="a" style="left:1074.9px;top:933.1px;width:673.8px;height:27px;background:#eaf2fc;"></div>
<div class="a" style="left:1750.2px;top:933.1px;width:139.5999999999999px;height:27px;background:#eaf2fc;"></div>
<svg class="a" style="left:270px;top:938.0px;" width="16" height="16" viewBox="0 0 16 16"><circle cx="8" cy="8" r="6.8" fill="#1e9e32" stroke="#137a22" stroke-width="0.8"></circle><path d="M4.8 8.2l2.3 2.2 4.2-4.2" stroke="#fff" stroke-width="2" fill="none"></path></svg>
<span class="t" style="left: 316px; top: 936.7px; font-size: 14.5px; color: rgb(17, 17, 17); transform: scaleX(0.9045);">56</span>
<span class="t" style="left: 342px; top: 936.7px; font-size: 14.5px; color: rgb(17, 17, 17); transform: scaleX(0.9034);">19:50:18</span>
<span class="t" style="left: 405.2px; top: 936.7px; font-size: 14.5px; color: rgb(17, 17, 17); transform: scaleX(0.9184);">SELECT * FROM test.comment LIMIT 0, 1000</span>
<span class="t" style="left: 1078.8px; top: 936.7px; font-size: 14.5px; color: rgb(17, 17, 17); transform: scaleX(0.884);">2 row(s) returned</span>
<span class="t" style="left: 1753.2px; top: 936.7px; font-size: 14.5px; color: rgb(17, 17, 17); transform: scaleX(0.9489);">0.000 sec / 0.000 sec</span>
<svg class="a" style="left:270px;top:966.6999999999999px;" width="16" height="16" viewBox="0 0 16 16"><circle cx="8" cy="8" r="6.8" fill="#1e9e32" stroke="#137a22" stroke-width="0.8"></circle><path d="M4.8 8.2l2.3 2.2 4.2-4.2" stroke="#fff" stroke-width="2" fill="none"></path></svg>
<span class="t" style="left: 316px; top: 965.4px; font-size: 14.5px; color: rgb(17, 17, 17); transform: scaleX(0.9045);">57</span>
<span class="t" style="left: 342px; top: 965.4px; font-size: 14.5px; color: rgb(17, 17, 17); transform: scaleX(0.9034);">19:50:31</span>
<span class="t" style="left: 405.2px; top: 965.4px; font-size: 14.5px; color: rgb(17, 17, 17); transform: scaleX(0.9184);">SELECT * FROM test.comment LIMIT 0, 1000</span>
<span class="t" style="left: 1078.8px; top: 965.4px; font-size: 14.5px; color: rgb(17, 17, 17); transform: scaleX(0.884);">3 row(s) returned</span>
<span class="t" style="left: 1753.2px; top: 965.4px; font-size: 14.5px; color: rgb(17, 17, 17); transform: scaleX(0.9489);">0.000 sec / 0.000 sec</span>
<div class="a" style="left:265px;top:1012px;width:1653px;height:8px;background:#ededf0;"></div>
<div class="a" style="left:0px;top:1020px;width:1920px;height:60px;background:linear-gradient(90deg,#1c1d24 0%,#1b1f2a 35%,#1a2333 55%,#1b2138 80%,#1c1d3a 100%);"></div>
<svg class="a" style="left:24px;top:1030px;" width="36" height="36" viewBox="0 0 36 36"><defs><linearGradient id="cl" x1="0" y1="0" x2="0" y2="1"><stop offset="0" stop-color="#d6e6fb"></stop><stop offset="1" stop-color="#7aa5dc"></stop></linearGradient><linearGradient id="mn" x1="0" y1="0" x2="0" y2="1"><stop offset="0" stop-color="#f7c13a"></stop><stop offset="1" stop-color="#ee8a1a"></stop></linearGradient></defs><circle cx="13" cy="14" r="9" fill="url(#mn)"></circle><circle cx="18" cy="9" r="8.5" fill="#1c1d24"></circle><path d="M6 33h20a6 6 0 0 0 1-12 8.5 8.5 0 0 0-16-1 6.5 6.5 0 0 0-5 13z" fill="url(#cl)"></path></svg>
<svg class="a" style="left:38px;top:1028px;" width="21" height="21" viewBox="0 0 21 21"><circle cx="10.5" cy="10.5" r="9.6" fill="#c42b1c"></circle></svg>
<span class="t" style="left:45px;top:1033.0px;font-size:13px;color:#fff;font-weight:bold;">1</span>
<span class="t" style="left: 64.5px; top: 1032.5px; font-size: 14px; color: rgb(240, 240, 240); transform: scaleX(0.8936);">1°C</span>
<span class="t" style="left: 64.5px; top: 1053.1px; font-size: 14px; color: rgb(230, 230, 230); transform: scaleX(1.0488);">대체로 흐림</span>
<svg class="a" style="left:392px;top:1035px;" width="31" height="31" viewBox="0 0 31 31"><defs><linearGradient id="win" x1="0" y1="0" x2="1" y2="1"><stop offset="0" stop-color="#6fd0f8"></stop><stop offset="1" stop-color="#1590e8"></stop></linearGradient></defs><rect x="0.5" y="0.5" width="14" height="14" rx="1.5" fill="url(#win)"></rect><rect x="16" y="0.5" width="14" height="14" rx="1.5" fill="url(#win)"></rect><rect x="0.5" y="16" width="14" height="14" rx="1.5" fill="url(#win)"></rect><rect x="16" y="16" width="14" height="14" rx="1.5" fill="url(#win)"></rect></svg>
<div class="a" style="left:440px;top:1031px;width:273px;height:38px;background:#f3f3f3;border-radius:19px"></div>
<svg class="a" style="left:453px;top:1040px;" width="22" height="22" viewBox="0 0 22 22"><circle cx="8.5" cy="8.5" r="6.5" fill="none" stroke="#1a1a1a" stroke-width="2"></circle><path d="M13.3 13.3l5.5 5.5" stroke="#1a1a1a" stroke-width="2.2" stroke-linecap="round"></path></svg>
<span class="t" style="left: 486px; top: 1043.1px; font-size: 17px; color: rgb(92, 92, 92); transform: scaleX(0.9706);">검색</span>
<svg class="a" style="left:650px;top:1036px;" width="62" height="30" viewBox="0 0 62 30"><defs><linearGradient id="lk" x1="0" y1="0" x2="0" y2="1"><stop offset="0" stop-color="#8d7fd4"></stop><stop offset="1" stop-color="#f1c8e6"></stop></linearGradient></defs><path d="M0 26c8-6 14-14 22-18l8-4 8 3 10-3 12 4v14c-20 8-40 10-60 4z" fill="url(#lk)" opacity="0.85"></path><circle cx="19" cy="7" r="3.5" fill="#f5c842"></circle><path d="M18 23l10-11 9 12z" fill="#e2e2f5"></path></svg>
<svg class="a" style="left:729px;top:1037px;" width="32" height="30" viewBox="0 0 32 30"><defs><linearGradient id="cp" x1="0" y1="0" x2="0" y2="1"><stop offset="0" stop-color="#1e9ef0"></stop><stop offset="1" stop-color="#b8d936"></stop></linearGradient><linearGradient id="cp2" x1="0" y1="0" x2="0" y2="1"><stop offset="0" stop-color="#a96cf0"></stop><stop offset="1" stop-color="#f25aa0"></stop></linearGradient></defs><path d="M1.5 18L7 4Q8 2 10 2H15Q17 2 16.5 4L11 18Q10 20 8 20H3Q1 20 1.5 18z" fill="url(#cp)"></path><path d="M12 22L17.5 8Q18.5 6 20.5 6H25Q27 6 26.5 8L21 22Q20 24 18 24H13Q11 24 12 22z" fill="url(#cp2)"></path><path d="M14 3h4l-2 5z" fill="#2a5fe0"></path><rect x="8.5" y="19" width="22" height="10.5" rx="2.5" fill="#f5c518"></rect><text x="11.2" y="27.8" font-family="Liberation Sans" font-weight="bold" font-size="8.8" letter-spacing="0.6" fill="#1a1a1a">PRE</text></svg>
<svg class="a" style="left:783px;top:1036px;" width="32" height="30" viewBox="0 0 32 30"><rect x="1" y="8" width="21" height="20" rx="1.5" fill="#6b6b6b"></rect><rect x="8" y="1" width="22" height="21" rx="1.5" fill="#f0f0f0"></rect><rect x="8" y="8" width="14" height="14" fill="#b5b5b5"></rect></svg>
<svg class="a" style="left:840px;top:1037px;" width="30" height="26" viewBox="0 0 30 26"><circle cx="16.5" cy="4.5" r="4" fill="#7b83eb"></circle><circle cx="25" cy="6" r="3" fill="#5059c9"></circle><path d="M20 11h9v9a5 5 0 0 1-9 0z" fill="#5059c9"></path><path d="M10 11h14v10a7 7 0 0 1-14 0z" fill="#7b83eb"></path><rect x="0.5" y="7" width="15" height="15" fill="#fff"></rect><path d="M4 10.5h8M8 10.5v9" stroke="#4b53bc" stroke-width="2.4"></path></svg>
<svg class="a" style="left:893px;top:1034px;" width="32" height="32" viewBox="0 0 32 32"><defs><linearGradient id="ed" x1="0" y1="1" x2="1" y2="0"><stop offset="0" stop-color="#0f6fd0"></stop><stop offset="0.55" stop-color="#2ab4ea"></stop><stop offset="1" stop-color="#62e07a"></stop></linearGradient></defs><circle cx="16" cy="16" r="15" fill="url(#ed)"></circle><path d="M5 11C2 20 8 31 19 30.5c5-.3 9-3 11-7-4 3-11 4-15 0-3-3-3-8 1-10-5 0-9 1-11-2.5z" fill="#0b54a0"></path><ellipse cx="18" cy="14.5" rx="3.6" ry="3" fill="#1a2232"></ellipse></svg>
<div class="a" style="left:905.0px;top:1070px;width:8px;height:4px;background:#9a9a9a;border-radius:2px"></div>
<svg class="a" style="left:948px;top:1034px;" width="32" height="32" viewBox="0 0 32 32"><circle cx="16" cy="16" r="15" fill="#e33b2e"></circle><path d="M16 16L29 8.5A15 15 0 0 1 16 31z" fill="#f9c21b"></path><path d="M16 16L16 31A15 15 0 0 1 3 8.5z" fill="#22a350"></path><path d="M16 16L3 8.5A15 15 0 0 1 29 8.5z" fill="#e33b2e"></path><circle cx="16" cy="16" r="7" fill="#fff"></circle><circle cx="16" cy="16" r="5.5" fill="#3b78e7"></circle></svg>
<div class="a" style="left:960.0px;top:1070px;width:8px;height:4px;background:#9a9a9a;border-radius:2px"></div>
<svg class="a" style="left:1003px;top:1035px;" width="32" height="30" viewBox="0 0 32 30"><path d="M1 11L16 1 31 11z" fill="#1565b8"></path><rect x="1" y="10" width="30" height="19" fill="#2aa6ef"></rect><path d="M1 10l15 10 15-10z" fill="#e8f1f8"></path><path d="M1 29l15-11 15 11z" fill="#1b8ad9"></path></svg>
<svg class="a" style="left:1058px;top:1034px;" width="32" height="32" viewBox="0 0 32 32"><rect x="1" y="1" width="30" height="30" rx="11" fill="#3540d4"></rect><path d="M21 12a7 7 0 1 0 0 8" stroke="#fff" stroke-width="2.3" fill="none"></path><path d="M16 12h10M17 15h9M18 18h8" stroke="#c9ceff" stroke-width="1.3"></path><path d="M19 21l4 4" stroke="#fff" stroke-width="2"></path></svg>
<svg class="a" style="left:1113px;top:1034px;" width="32" height="32" viewBox="0 0 32 32"><rect x="1" y="1" width="30" height="30" rx="11" fill="#7a5be0"></rect><circle cx="16" cy="16" r="9.5" fill="none" stroke="#c7b8ff" stroke-width="1.4" stroke-dasharray="12 3"></circle><path d="M10.5 16h10M17 12l4 4-4 4" stroke="#fff" stroke-width="2.2" fill="none"></path></svg>
<svg class="a" style="left:1168px;top:1035px;" width="32" height="30" viewBox="0 0 32 30"><path d="M1 3a2 2 0 0 1 2-2h8l3 3h15a2 2 0 0 1 2 2v22H1z" fill="#e8a921"></path><rect x="1" y="6" width="30" height="23" rx="1" fill="#fcc94a"></rect><path d="M6 29v-7a2 2 0 0 1 2-2h16a2 2 0 0 1 2 2v7z" fill="#1e7ad6"></path><path d="M9 24h14" stroke="#0b4f9a" stroke-width="1.2"></path></svg>
<div class="a" style="left:1180.0px;top:1070px;width:8px;height:4px;background:#9a9a9a;border-radius:2px"></div>
<svg class="a" style="left:1222px;top:1034px;" width="32" height="32" viewBox="0 0 32 32"><path d="M2 6l8-5 8 3-4 26-11-4z" fill="#f0506e"></path><path d="M8 2l6 3 16 2 1 14-6 9-15-2z" fill="#fc801d"></path><path d="M18 3l13 5-2 18-8 5z" fill="#087cfa"></path><path d="M2 17l10-4 3 15-10-1z" fill="#f97a12"></path><rect x="6" y="6" width="20" height="20" fill="#000"></rect><text x="8.5" y="16" font-family="Liberation Mono" font-weight="bold" font-size="9" fill="#fff">IJ</text><rect x="8.5" y="21" width="7" height="1.6" fill="#fff"></rect></svg>
<div class="a" style="left:1234.0px;top:1070px;width:8px;height:4px;background:#9a9a9a;border-radius:2px"></div>
<div class="a" style="left:1269.5px;top:1025px;width:49px;height:49.5px;background:#292e3a;border-radius:5px"></div>
<svg class="a" style="left:1279px;top:1035px;" width="30" height="30" viewBox="0 0 30 30"><defs><linearGradient id="mw" x1="0" y1="0" x2="1" y2="1"><stop offset="0" stop-color="#3f7ea6"></stop><stop offset="1" stop-color="#24516f"></stop></linearGradient></defs><rect x="0.5" y="0.5" width="29" height="29" rx="3" fill="url(#mw)"></rect><path d="M5 6c4-1 8 3 10 8 1 4 3 8 7 11M6 8c0 4 3 7 4 10M22 5l4 4M23 8l2-2" stroke="#d5e6f2" stroke-width="1" fill="none"></path></svg>
<div class="a" style="left:1284px;top:1070px;width:20px;height:4px;background:#4cc2ff;border-radius:2px"></div>
<svg class="a" style="left:1334px;top:1035px;" width="31" height="31" viewBox="0 0 31 31"><circle cx="15.2" cy="14.7" r="15" fill="#ff6c37"></circle><path d="M7 24l12-12M19 12c1-2 3-4 5-3s0 4-2 5" stroke="#fff" stroke-width="2" fill="none"></path><circle cx="22" cy="8" r="2.5" fill="#fff"></circle></svg>
<div class="a" style="left:1345.0px;top:1070px;width:8px;height:4px;background:#9a9a9a;border-radius:2px"></div>
<svg class="a" style="left:1388px;top:1034px;" width="32" height="32" viewBox="0 0 32 32"><path d="M23 1l8 4v22l-8 4-14-12-6 5-2-1V9l2-1 6 5z" fill="#9b6fd6"></path><path d="M23 1l8 4v22l-8 4z" fill="#c58ff5"></path><path d="M3 11l5 5-5 5z" fill="#1b1f2c"></path><path d="M23 10v12l-7-6z" fill="#1b1f2c"></path></svg>
<div class="a" style="left:1400.0px;top:1070px;width:8px;height:4px;background:#9a9a9a;border-radius:2px"></div>
<svg class="a" style="left:1447px;top:1034px;" width="24" height="32" viewBox="0 0 24 32"><rect x="1" y="2" width="22" height="27" rx="1" fill="#5cc4e6"></rect><rect x="1" y="26" width="22" height="2" fill="#f2f2f2"></rect><rect x="1" y="28" width="22" height="2.5" fill="#b05e1a"></rect><path d="M5 9h14M5 14h14M5 19h14" stroke="#0d6d92" stroke-width="1.6"></path><path d="M4 2l1.5-1.5L7 2M9 2l1.5-1.5L12 2M14 2l1.5-1.5L17 2M19 2l1.5-1.5L22 2" fill="#0d6d92" stroke="#0d6d92"></path></svg>
<div class="a" style="left:1455.0px;top:1070px;width:8px;height:4px;background:#9a9a9a;border-radius:2px"></div>
<svg class="a" style="left:1500px;top:1036px;" width="28" height="28" viewBox="0 0 28 28"><defs><linearGradient id="ph" x1="0" y1="0" x2="1" y2="1"><stop offset="0" stop-color="#2c8ae8"></stop><stop offset="1" stop-color="#8a56d6"></stop></linearGradient></defs><rect x="1" y="1" width="26" height="26" rx="4" fill="url(#ph)"></rect><path d="M1 24L13 11l14 14v2H1z" fill="#29b6f6"></path><path d="M7 27l13-12 7 7v5z" fill="#1a8ad8"></path><circle cx="20.5" cy="6.5" r="2.5" fill="#f0f0f0"></circle></svg>
<div class="a" style="left:1510.0px;top:1070px;width:8px;height:4px;background:#9a9a9a;border-radius:2px"></div>
<svg class="a" style="left:1609px;top:1044px;" width="16" height="10" viewBox="0 0 16 10"><path d="M1.5 8.5L8 2l6.5 6.5" stroke="#fff" stroke-width="1.6" fill="none"></path></svg>
<span class="t" style="left: 1648px; top: 1041.4px; font-size: 22px; color: rgb(240, 240, 240); transform: scaleX(1.1574);">A</span>
<svg class="a" style="left:1686px;top:1039px;" width="23" height="22" viewBox="0 0 23 22"><rect x="1" y="2" width="14" height="12" fill="none" stroke="#fff" stroke-width="1.4"></rect><path d="M5 18h6M8 14v4" stroke="#fff" stroke-width="1.4"></path><rect x="16" y="1" width="4" height="5" fill="none" stroke="#fff" stroke-width="1.2"></rect><path d="M18 6v14" stroke="#fff" stroke-width="1.4"></path></svg>
<svg class="a" style="left:1716px;top:1040px;" width="22" height="19" viewBox="0 0 22 19"><path d="M2 7h4l5-4.5v14L6 12H2z" fill="none" stroke="#fff" stroke-width="1.4"></path><path d="M14 6a4 4 0 0 1 0 7M16.5 3.5a7.5 7.5 0 0 1 0 12M19 1a11 11 0 0 1 0 17" stroke="#fff" stroke-width="1.4" fill="none"></path></svg>
<svg class="a" style="left:1746px;top:1039px;" width="22" height="19" viewBox="0 0 22 19"><rect x="1.5" y="6" width="16" height="10" rx="2" fill="none" stroke="#fff" stroke-width="1.5"></rect><rect x="18" y="9" width="2" height="4" fill="#fff"></rect><path d="M6 1l-3 6h3l-2 5" stroke="#fff" stroke-width="1.3" fill="none"></path></svg>
<span class="t" style="left: 1803px; top: 1033.1px; font-size: 14px; color: rgb(240, 240, 240); transform: scaleX(1.0568);">오후 7:50</span>
<span class="t" style="left: 1788px; top: 1053.2px; font-size: 14.5px; color: rgb(240, 240, 240); transform: scaleX(1.0314);">2023-12-01</span>
<svg class="a" style="left:1876px;top:1039px;" width="20" height="21" viewBox="0 0 20 21"><path d="M3 15V9a6.5 6.5 0 0 1 11-4.5M3 15h14l-2-2V10" stroke="#fff" stroke-width="1.4" fill="none"></path><path d="M8 17.5a2 2 0 0 0 4 0" stroke="#fff" stroke-width="1.3" fill="none"></path><path d="M12 6h4l-4 4h4M15 1h3l-3 3h3" stroke="#fff" stroke-width="1.2" fill="none"></path></svg>
</body></html>
